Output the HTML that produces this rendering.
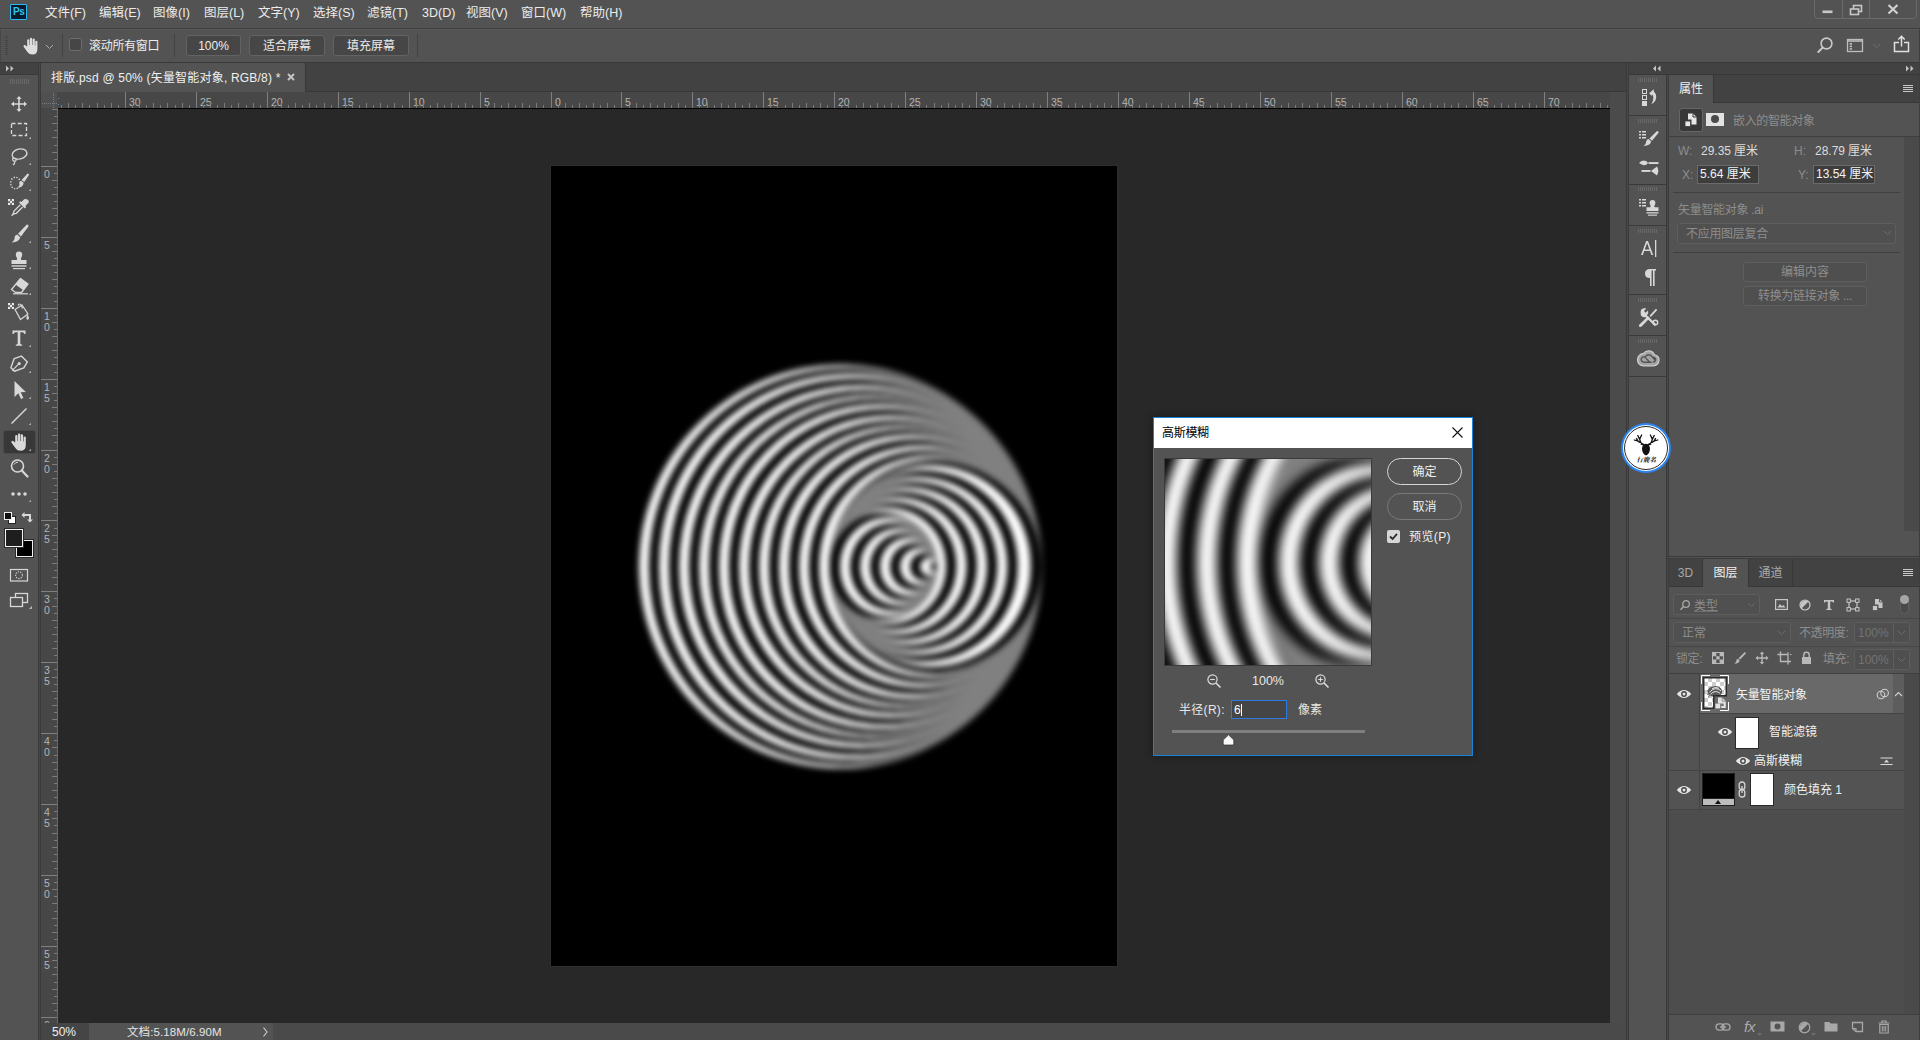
<!DOCTYPE html>
<html lang="zh-CN"><head><meta charset="utf-8"><title>排版.psd @ 50% - Photoshop</title>
<style>
html,body{margin:0;padding:0}
body{width:1920px;height:1040px;overflow:hidden;background:#535353;position:relative;
 font-family:"Liberation Sans","Noto Sans CJK SC",sans-serif;font-size:12px;color:#e4e4e4;line-height:1}
*{box-sizing:border-box}
.a{position:absolute}
.t{position:absolute;white-space:nowrap;line-height:16px;height:16px}
.dim{color:#8d8d8d}
.mid{color:#b9b9b9}
/* bars */
#menubar{left:0;top:0;width:1920px;height:28px;background:#535353}
#menuline{left:0;top:28px;width:1920px;height:1px;background:#3f3f3f}
#optbar{left:0;top:29px;width:1920px;height:33px;background:#535353;border-left:1px solid #484848;border-top:1px solid #5a5a5a}
#optline{left:0;top:62px;width:1920px;height:1px;background:#383838}
.menu{top:5px;font-size:12.5px;color:#ececec}
.btn{position:absolute;top:35px;height:21px;border:1px solid #636363;border-radius:3px;background:#464646;color:#ececec;text-align:center;line-height:21px;font-size:12px}
.vsep{position:absolute;width:1px;background:#434343}
/* window controls */
#wc{left:1814px;top:-4px;width:103px;height:23px;border:1px solid #6a6a6a;border-radius:4px}
#wc i{position:absolute;top:0;width:1px;height:22px;background:#6a6a6a}
/* tools */
#toolhead{left:0;top:63px;width:38px;height:11px;background:#424242}
#tools{left:0;top:74px;width:38px;height:966px;background:#535353;border-top:1px solid #3a3a3a}
#toolborder{left:38px;top:63px;width:3px;height:977px;background:linear-gradient(90deg,#393939 0 1px,#484848 1px 2px,#3b3b3b 2px 3px)}
.grip{position:absolute;height:5px;background:repeating-linear-gradient(90deg,#686868 0 1px,transparent 1px 2px)}
/* doc area */
#tabbar{left:41px;top:63px;width:1585px;height:29px;background:#424242;border-bottom:1px solid #383838}
#doctab{left:41px;top:63px;width:265px;height:29px;background:#535353;border-right:1px solid #383838}
#hruler{left:41px;top:92px;width:1569px;height:17px;background:#474747;border-bottom:1px solid #000}
#vruler{left:41px;top:108px;width:17px;height:915px;background:#474747;border-right:1px solid #6a6a6a}
#corner{left:41px;top:92px;width:16px;height:16px;background:#505050}
.tk{position:absolute;width:1px;background:#7c7c7c}
.tk.M,.tkh.M{background:#808080}
.tkh{position:absolute;height:1px;background:#7c7c7c}
.rl{position:absolute;font-size:10.5px;line-height:10px;color:#b4b4b4}
#canvas{left:58px;top:109px;width:1552px;height:914px;background:#282828;overflow:hidden}
#doc{left:493px;top:57px;width:566px;height:800px;background:#000;box-shadow:0 0 0 1px #2d2d2d}
#vscroll{left:1610px;top:92px;width:16px;height:931px;background:#4b4b4b}
#status{left:41px;top:1023px;width:1585px;height:17px;background:#4a4a4a}
#zoombox{left:41px;top:1023px;width:48px;height:17px;background:#454545}
#docinfo{left:89px;top:1023px;width:184px;height:17px;background:#535353}
/* right dock */
#rborder{left:1626px;top:63px;width:3px;height:977px;background:linear-gradient(90deg,#393939 0 1px,#484848 1px 2px,#3b3b3b 2px 3px)}
#rhead{left:1629px;top:63px;width:291px;height:11px;background:#424242}
#rheadline{left:1629px;top:74px;width:291px;height:1px;background:#383838}
#dock{left:1629px;top:75px;width:37px;height:965px;background:#535353}
#dockborder{left:1666px;top:75px;width:3px;height:965px;background:linear-gradient(90deg,#393939 0 1px,#484848 1px 2px,#3b3b3b 2px 3px)}
.dsep{position:absolute;left:0;width:37px;height:1px;background:#3a3a3a}
/* properties */
#prop{left:1669px;top:75px;width:251px;height:481px;background:#535353}
.tabrow{position:absolute;left:0;top:0;width:251px;height:28px;background:#424242;border-bottom:1px solid #383838}
.tab{position:absolute;top:0;height:28px;line-height:27px;text-align:center;color:#a8a8a8;border-right:1px solid #383838;font-size:12px}
.tab.on{background:#535353;color:#f2f2f2;height:28px}
.inp{position:absolute;height:19px;border:1px solid #6a6a6a;background:#3d3d3d;color:#f4f4f4;line-height:17px;padding-left:2px;white-space:nowrap}
.hline{position:absolute;height:1px;background:#404040}
.dbtn{position:absolute;height:20px;border:1px solid #5f5f5f;border-radius:3px;background:#4f4f4f;color:#8e8e8e;text-align:center;line-height:18px}
/* layers */
#lay{left:1669px;top:557px;width:251px;height:483px;background:#535353;border-top:1px solid #535353}
.lrow{position:absolute;left:0;width:235px}
/* dialog */
#dlg{left:1153px;top:417px;width:320px;height:339px;background:#535353;border:1px solid #1883d7;box-shadow:0 0 8px rgba(0,0,0,.4)}
#dlgtitle{left:0;top:0;width:318px;height:30px;background:#fff;color:#000}
.pill{position:absolute;left:233px;width:75px;height:27px;border-radius:14px;text-align:center;line-height:26px;color:#f0f0f0;font-size:12px}

</style></head><body>
<!-- ===== menu bar ===== -->
<div class="a" id="menubar"></div>
<div class="a" id="menuline"></div>
<div class="a" style="left:10px;top:4px;width:17px;height:16px;background:#0b1a2a;border:1px solid #2fb7f1;border-radius:1px"></div>
<span class="t" style="left:13px;top:4px;font-size:10px;font-weight:bold;color:#31c5f0;letter-spacing:-.3px">Ps</span>
<span class="t menu" style="left:45px">文件(F)</span>
<span class="t menu" style="left:99px">编辑(E)</span>
<span class="t menu" style="left:153px">图像(I)</span>
<span class="t menu" style="left:204px">图层(L)</span>
<span class="t menu" style="left:258px">文字(Y)</span>
<span class="t menu" style="left:313px">选择(S)</span>
<span class="t menu" style="left:367px">滤镜(T)</span>
<span class="t menu" style="left:422px">3D(D)</span>
<span class="t menu" style="left:466px">视图(V)</span>
<span class="t menu" style="left:521px">窗口(W)</span>
<span class="t menu" style="left:580px">帮助(H)</span>
<div class="a" id="wc"><i style="left:27px"></i><i style="left:54px"></i></div>
<svg class="a" style="left:1822px;top:10px" width="12" height="4" viewBox="0 0 12 4" ><rect x="0.5" y="0.5" width="10" height="2.6" fill="#c8c8c8"/></svg><svg class="a" style="left:1849px;top:4px" width="14" height="12" viewBox="0 0 14 12" ><rect x="4.5" y="1.5" width="8" height="6" fill="none" stroke="#c8c8c8" stroke-width="1.6"/><rect x="1.5" y="5" width="8" height="5.5" fill="#535353" stroke="#c8c8c8" stroke-width="1.6"/></svg><svg class="a" style="left:1887px;top:4px" width="12" height="11" viewBox="0 0 12 11" ><path d="M1.5 1 L10.5 9.5 M10.5 1 L1.5 9.5" stroke="#d0d0d0" stroke-width="2.2" fill="none"/></svg>

<!-- ===== options bar ===== -->
<div class="a" id="optbar"></div>
<div class="a" id="optline"></div>
<div class="a" style="left:5px;top:36px;width:3px;height:19px;background:repeating-linear-gradient(0deg,#454545 0 1px,transparent 1px 2px)"></div>
<svg class="a" style="left:20px;top:35px" width="22" height="22" viewBox="0 0 22 22" ><path d="M7.2 11.5 V5.4 a1.1 1.1 0 0 1 2.2 0 V10 h.5 V3.9 a1.1 1.1 0 0 1 2.2 0 V10 h.5 V4.6 a1.1 1.1 0 0 1 2.2 0 V10.6 h.5 V6.8 a1.05 1.05 0 0 1 2.1 0 V14 Q17.5 19.6 12.4 19.6 Q9.2 19.6 7.6 17.2 L3.6 11.8 Q3.1 10.6 4.2 10.1 Q5.1 9.8 5.9 10.7 Z" fill="#dedede"/></svg><svg class="a" style="left:45px;top:44px" width="9" height="6" viewBox="0 0 9 6" ><path d="M1 1 L4.5 4.5 L8 1" fill="none" stroke="#a9a9a9" stroke-width="1"/></svg>
<div class="vsep" style="left:62px;top:34px;height:23px"></div>
<div class="a" style="left:69px;top:38px;width:13px;height:13px;border:1px solid #6d6d6d;border-radius:2px;background:#464646"></div>
<span class="t" style="left:89px;top:38px;color:#ececec;letter-spacing:-.3px">滚动所有窗口</span>
<div class="vsep" style="left:174px;top:34px;height:23px"></div>
<div class="btn" style="left:186px;width:55px">100%</div>
<div class="btn" style="left:249px;width:76px">适合屏幕</div>
<div class="btn" style="left:333px;width:76px">填充屏幕</div>
<div class="vsep" style="left:417px;top:34px;height:23px"></div>
<svg class="a" style="left:1816px;top:36px" width="18" height="18" viewBox="0 0 18 18" ><circle cx="10.5" cy="7.5" r="5.4" fill="none" stroke="#c9c9c9" stroke-width="1.6"/><path d="M6.6 11.6 L2.3 16" stroke="#c9c9c9" stroke-width="2" stroke-linecap="round"/></svg><svg class="a" style="left:1846px;top:38px" width="18" height="15" viewBox="0 0 18 15" ><rect x="1.5" y="1.5" width="15" height="12" fill="none" stroke="#bdbdbd" stroke-width="1.3"/><path d="M1.5 3 H16.5" stroke="#bdbdbd" stroke-width="1.6"/><rect x="3.6" y="5" width="2.4" height="1.6" fill="#bdbdbd"/><rect x="3.6" y="7.6" width="2.4" height="1.6" fill="#bdbdbd"/><rect x="3.6" y="10.2" width="2.4" height="1.6" fill="#bdbdbd"/></svg><svg class="a" style="left:1872px;top:43px" width="9" height="6" viewBox="0 0 9 6" ><path d="M1 1 L4.5 4.5 L8 1" fill="none" stroke="#6c6c6c" stroke-width="1"/></svg><svg class="a" style="left:1892px;top:34px" width="20" height="20" viewBox="0 0 20 20" ><path d="M7 8.5 H2.5 V17.5 H16.5 V8.5 H12" fill="none" stroke="#e0e0e0" stroke-width="1.5"/><path d="M9.5 12.5 V2.5 M6.3 5.6 L9.5 2.3 L12.7 5.6" fill="none" stroke="#e0e0e0" stroke-width="1.5"/></svg>

<!-- ===== tools panel ===== -->
<div class="a" id="toolhead"></div>
<div class="a" id="tools"></div>
<div class="a" id="toolborder"></div>
<svg class="a" style="left:5px;top:65px" width="10" height="7" viewBox="0 0 10 7" ><path d="M1 0.5 L4 3.5 L1 6.5 Z M5.5 0.5 L8.5 3.5 L5.5 6.5 Z" fill="#c4c4c4"/></svg>
<div class="grip" style="left:10px;top:79px;width:19px"></div>
<div class="a" style="left:3px;top:430px;width:33px;height:24px;background:#383838;border:1px solid #4a4a4a;border-radius:3px"></div><svg class="a" style="left:7px;top:92px" width="24" height="24" viewBox="0 0 24 24" ><path d="M12 4 L14.6 7 H12.8 V11.2 H17 V9.4 L20 12 L17 14.6 V12.8 H12.8 V17 H14.6 L12 20 L9.4 17 H11.2 V12.8 H7 V14.6 L4 12 L7 9.4 V11.2 H11.2 V7 H9.4 Z" fill="#d8d8d8"/></svg><svg class="a" style="left:7px;top:118px" width="24" height="24" viewBox="0 0 24 24" ><rect x="4.5" y="5.5" width="15" height="12" fill="none" stroke="#d8d8d8" stroke-width="1.3" stroke-dasharray="4 2.2"/><path d="M25 21 h-3.2 l3.2 -3.2 z" fill="#b0b0b0"/></svg><svg class="a" style="left:7px;top:144px" width="24" height="24" viewBox="0 0 24 24" ><ellipse cx="12.5" cy="10" rx="7.5" ry="5" fill="none" stroke="#d8d8d8" stroke-width="1.4" transform="rotate(-12 12.5 10)"/><path d="M7 13.5 q-2 1 -1 3 q1.5 1.5 3 0 q.8 -1.5 -1 -2.2 M8 16.8 q0 3 -2 4.2" fill="none" stroke="#d8d8d8" stroke-width="1.2"/><path d="M25 21 h-3.2 l3.2 -3.2 z" fill="#b0b0b0"/></svg><svg class="a" style="left:7px;top:170px" width="24" height="24" viewBox="0 0 24 24" ><ellipse cx="8.5" cy="13" rx="4.8" ry="5.8" fill="none" stroke="#d8d8d8" stroke-width="1.3" stroke-dasharray="1.4 1.4"/><path d="M20.6 3.4 Q22.2 3.4 22 5 L17.2 12 L14.6 10 Z" fill="#d8d8d8"/><path d="M14 10.8 L16.6 12.8 Q16.4 17 10.6 18 Q13.4 15.6 12.4 12.6 Z" fill="#d8d8d8"/><path d="M25 21 h-3.2 l3.2 -3.2 z" fill="#b0b0b0"/></svg><svg class="a" style="left:7px;top:196px" width="24" height="24" viewBox="0 0 24 24" ><path d="M19.5 3.2 a2.4 2.4 0 0 1 1.6 4.1 L18.3 10 L19.2 11 L17.8 12.4 L12 6.6 L13.4 5.2 L14.4 6.1 L17.2 3.3 a2.4 2.4 0 0 1 2.3 -.1 Z" fill="#d8d8d8"/><path d="M13.3 8.8 L7 15.1 L6.2 18 L9.3 17.3 L15.6 11 " fill="none" stroke="#d8d8d8" stroke-width="1.3"/><path d="M6.5 17.8 L4.6 19.8" stroke="#d8d8d8" stroke-width="1.3"/><rect x="1" y="3" width="6" height="6" fill="#777"/><path d="M1 3h2v2h-2z M5 3h2v2h-2z M3 5h2v2h-2z M1 7h2v2h-2z M5 7h2v2h-2z" fill="#e8e8e8"/></svg><svg class="a" style="left:7px;top:222px" width="24" height="24" viewBox="0 0 24 24" ><path d="M19.8 2.6 Q21.6 2.4 21.6 4.2 L14 14.4 L11 11.8 Z" fill="#d8d8d8"/><path d="M10.2 12.6 L13.2 15.2 Q12.6 20 4.6 20.6 Q8 18 7.6 15 Q8.4 12.8 10.2 12.6 Z" fill="#d8d8d8"/><path d="M25 21 h-3.2 l3.2 -3.2 z" fill="#b0b0b0"/></svg><svg class="a" style="left:7px;top:248px" width="24" height="24" viewBox="0 0 24 24" ><path d="M12 3.5 a3.2 3.2 0 0 1 3.2 3.2 q0 1.5 -1 3 q-.6 1.3 .3 2.3 H19.5 V16 H4.5 V12 H9.5 q.9 -1 .3 -2.3 q-1 -1.5 -1 -3 A3.2 3.2 0 0 1 12 3.5 Z" fill="#d8d8d8"/><rect x="4.5" y="17.3" width="15" height="1.4" fill="#d8d8d8"/><rect x="6" y="20" width="12" height="1.2" fill="#d8d8d8"/><path d="M25 21 h-3.2 l3.2 -3.2 z" fill="#b0b0b0"/></svg><svg class="a" style="left:7px;top:274px" width="24" height="24" viewBox="0 0 24 24" ><path d="M13.5 4.5 L21 10 L14.5 18.5 H8.5 L4.5 15.5 Z" fill="none" stroke="#d8d8d8" stroke-width="1.3" stroke-linejoin="round"/><path d="M13.5 4.5 L21 10 L16.3 16.2 L8.8 10.7 Z" fill="#d8d8d8"/><path d="M6 19.8 H21" stroke="#d8d8d8" stroke-width="1.2"/><path d="M25 21 h-3.2 l3.2 -3.2 z" fill="#b0b0b0"/></svg><svg class="a" style="left:7px;top:300px" width="24" height="24" viewBox="0 0 24 24" ><path d="M8 9.5 L15 5 L21 14 L13.5 19.5 Z" fill="none" stroke="#d8d8d8" stroke-width="1.3" stroke-linejoin="round"/><path d="M11 5.5 Q12 2.5 14.5 5.5 L15.5 8.5" fill="none" stroke="#d8d8d8" stroke-width="1.2"/><path d="M20.5 14.5 Q23 18 21.3 19.5 Q19.5 20.3 19.3 18 Q19.5 16.5 20.5 14.5 Z" fill="#d8d8d8"/><rect x="1" y="3" width="6" height="6" fill="#777"/><path d="M1 3h2v2h-2z M5 3h2v2h-2z M3 5h2v2h-2z M1 7h2v2h-2z M5 7h2v2h-2z" fill="#e8e8e8"/></svg><svg class="a" style="left:7px;top:326px" width="24" height="24" viewBox="0 0 24 24" ><path d="M5.5 4.5 H18.5 V8 H17.3 Q17 6.2 15.5 6.2 H13.3 V17.6 Q13.3 18.6 15.2 18.7 V19.8 H8.8 V18.7 Q10.7 18.6 10.7 17.6 V6.2 H8.5 Q7 6.2 6.7 8 H5.5 Z" fill="#d8d8d8"/><path d="M25 21 h-3.2 l3.2 -3.2 z" fill="#b0b0b0"/></svg><svg class="a" style="left:7px;top:352px" width="24" height="24" viewBox="0 0 24 24" ><path d="M13.2 3.8 L20 8.8 L17.3 15.2 L8.5 19.8 L4.5 16.8 L6.5 7.3 Z" fill="none" stroke="#d8d8d8" stroke-width="1.4" stroke-linejoin="round" transform="rotate(8 12 12)"/><circle cx="12.2" cy="11.6" r="1.6" fill="#d8d8d8"/><path d="M5.2 18.6 L11.2 12.4" stroke="#d8d8d8" stroke-width="1.2"/><path d="M25 21 h-3.2 l3.2 -3.2 z" fill="#b0b0b0"/></svg><svg class="a" style="left:7px;top:378px" width="24" height="24" viewBox="0 0 24 24" ><path d="M7.5 3 L7.5 19 L11.3 15.2 L14 21 L16.4 19.9 L13.7 14.2 L18.8 14 Z" fill="#d8d8d8"/><path d="M25 21 h-3.2 l3.2 -3.2 z" fill="#b0b0b0"/></svg><svg class="a" style="left:7px;top:404px" width="24" height="24" viewBox="0 0 24 24" ><path d="M4.5 19.5 L19.5 4.5" stroke="#d8d8d8" stroke-width="1.5"/><path d="M25 21 h-3.2 l3.2 -3.2 z" fill="#b0b0b0"/></svg><svg class="a" style="left:7px;top:430px" width="24" height="24" viewBox="0 0 24 24" ><path d="M8.2 12.5 V6.2 a1.15 1.15 0 0 1 2.3 0 V11 h.5 V4.6 a1.15 1.15 0 0 1 2.3 0 V11 h.5 V5.4 a1.15 1.15 0 0 1 2.3 0 V11.6 h.5 V7.6 a1.1 1.1 0 0 1 2.2 0 V15 Q18.8 20.8 13.6 20.8 Q10.2 20.8 8.6 18.3 L4.4 12.6 Q3.9 11.4 5 10.9 Q6 10.6 6.8 11.5 Z" fill="#d8d8d8"/><path d="M25 21 h-3.2 l3.2 -3.2 z" fill="#b0b0b0"/></svg><svg class="a" style="left:7px;top:456px" width="24" height="24" viewBox="0 0 24 24" ><circle cx="10.5" cy="10" r="6" fill="none" stroke="#d8d8d8" stroke-width="1.6"/><path d="M14.8 14.6 L20.5 20.5" stroke="#d8d8d8" stroke-width="2.2" stroke-linecap="round"/><path d="M7 8.5 Q8.5 6 11 6.2" fill="none" stroke="#d8d8d8" stroke-width="1"/></svg><svg class="a" style="left:7px;top:482px" width="24" height="24" viewBox="0 0 24 24" ><circle cx="6" cy="12" r="1.8" fill="#d8d8d8"/><circle cx="12" cy="12" r="1.8" fill="#d8d8d8"/><circle cx="18" cy="12" r="1.8" fill="#d8d8d8"/><path d="M25 20 h-3.2 l3.2 -3.2 z" fill="#b0b0b0"/></svg><svg class="a" style="left:3px;top:511px" width="14" height="14" viewBox="0 0 14 14" ><rect x="5.5" y="5.5" width="7" height="7" fill="#fff" stroke="#222" stroke-width="1"/><rect x="1.5" y="1.5" width="7" height="7" fill="#111" stroke="#eee" stroke-width="1"/></svg><svg class="a" style="left:20px;top:510px" width="14" height="14" viewBox="0 0 14 14" ><path d="M4.5 2 L1.5 5 L4.5 8 V6 H9 V9.5 H7 L10 12.5 L13 9.5 H11 V4 H4.5 Z" fill="#d8d8d8"/></svg><div class="a" style="left:16px;top:540px;width:17px;height:17px;background:#000;border:1px solid #f0f0f0;box-shadow:0 0 0 1px #2a2a2a"></div><div class="a" style="left:5px;top:529px;width:18px;height:18px;background:#1e1e1e;border:1px solid #f4f4f4;box-shadow:0 0 0 1px #2a2a2a"></div><svg class="a" style="left:9px;top:567px" width="20" height="16" viewBox="0 0 20 16" ><rect x="1.5" y="2.5" width="17" height="11.5" fill="none" stroke="#d8d8d8" stroke-width="1.2"/><circle cx="10" cy="8.2" r="3.4" fill="none" stroke="#d8d8d8" stroke-width="1.1" stroke-dasharray="1.2 1.2"/></svg><svg class="a" style="left:8px;top:592px" width="24" height="18" viewBox="0 0 24 18" ><rect x="7.5" y="1.5" width="12" height="9" fill="none" stroke="#d8d8d8" stroke-width="1.3"/><rect x="2.5" y="5.5" width="12" height="9" fill="#535353" stroke="#d8d8d8" stroke-width="1.3"/><path d="M24 17 h-3.2 l3.2 -3.2 z" fill="#b0b0b0"/></svg>

<!-- ===== document window ===== -->
<div class="a" id="tabbar"></div>
<div class="a" id="doctab"></div>
<span class="t" style="left:51px;top:70px;color:#f0f0f0;letter-spacing:.2px">排版.psd @ 50% (矢量智能对象, RGB/8) *</span>
<svg class="a" style="left:287px;top:73px" width="8" height="8" viewBox="0 0 8 8"><path d="M1 1 L7 7 M7 1 L1 7" stroke="#c6c6c6" stroke-width="1.9" fill="none"/></svg>
<div class="a" id="hruler"></div>
<div class="a" id="vruler"></div>
<div class="a" id="corner"></div>
<div class="a" style="left:42px;top:103px;width:15px;height:1px;background:repeating-linear-gradient(90deg,#7a7a7a 0 1px,transparent 1px 2px)"></div>
<div class="a" style="left:53px;top:93px;width:1px;height:15px;background:repeating-linear-gradient(0deg,#7a7a7a 0 1px,transparent 1px 2px)"></div>
<i class="tk" style="left:61px;top:105px;height:3px"></i><i class="tk" style="left:68px;top:103px;height:5px"></i><i class="tk" style="left:75px;top:105px;height:3px"></i><i class="tk" style="left:82px;top:103px;height:5px"></i><i class="tk" style="left:89px;top:105px;height:3px"></i><i class="tk" style="left:97px;top:103px;height:5px"></i><i class="tk" style="left:104px;top:105px;height:3px"></i><i class="tk" style="left:111px;top:103px;height:5px"></i><i class="tk" style="left:118px;top:105px;height:3px"></i><i class="tk M" style="left:125px;top:92px;height:16px"></i><span class="rl" style="left:129px;top:97px">30</span><i class="tk" style="left:132px;top:105px;height:3px"></i><i class="tk" style="left:139px;top:103px;height:5px"></i><i class="tk" style="left:146px;top:105px;height:3px"></i><i class="tk" style="left:153px;top:103px;height:5px"></i><i class="tk" style="left:160px;top:105px;height:3px"></i><i class="tk" style="left:167px;top:103px;height:5px"></i><i class="tk" style="left:175px;top:105px;height:3px"></i><i class="tk" style="left:182px;top:103px;height:5px"></i><i class="tk" style="left:189px;top:105px;height:3px"></i><i class="tk M" style="left:196px;top:92px;height:16px"></i><span class="rl" style="left:200px;top:97px">25</span><i class="tk" style="left:203px;top:105px;height:3px"></i><i class="tk" style="left:210px;top:103px;height:5px"></i><i class="tk" style="left:217px;top:105px;height:3px"></i><i class="tk" style="left:224px;top:103px;height:5px"></i><i class="tk" style="left:231px;top:105px;height:3px"></i><i class="tk" style="left:238px;top:103px;height:5px"></i><i class="tk" style="left:246px;top:105px;height:3px"></i><i class="tk" style="left:253px;top:103px;height:5px"></i><i class="tk" style="left:260px;top:105px;height:3px"></i><i class="tk M" style="left:267px;top:92px;height:16px"></i><span class="rl" style="left:271px;top:97px">20</span><i class="tk" style="left:274px;top:105px;height:3px"></i><i class="tk" style="left:281px;top:103px;height:5px"></i><i class="tk" style="left:288px;top:105px;height:3px"></i><i class="tk" style="left:295px;top:103px;height:5px"></i><i class="tk" style="left:302px;top:105px;height:3px"></i><i class="tk" style="left:309px;top:103px;height:5px"></i><i class="tk" style="left:316px;top:105px;height:3px"></i><i class="tk" style="left:324px;top:103px;height:5px"></i><i class="tk" style="left:331px;top:105px;height:3px"></i><i class="tk M" style="left:338px;top:92px;height:16px"></i><span class="rl" style="left:342px;top:97px">15</span><i class="tk" style="left:345px;top:105px;height:3px"></i><i class="tk" style="left:352px;top:103px;height:5px"></i><i class="tk" style="left:359px;top:105px;height:3px"></i><i class="tk" style="left:366px;top:103px;height:5px"></i><i class="tk" style="left:373px;top:105px;height:3px"></i><i class="tk" style="left:380px;top:103px;height:5px"></i><i class="tk" style="left:387px;top:105px;height:3px"></i><i class="tk" style="left:394px;top:103px;height:5px"></i><i class="tk" style="left:402px;top:105px;height:3px"></i><i class="tk M" style="left:409px;top:92px;height:16px"></i><span class="rl" style="left:413px;top:97px">10</span><i class="tk" style="left:416px;top:105px;height:3px"></i><i class="tk" style="left:423px;top:103px;height:5px"></i><i class="tk" style="left:430px;top:105px;height:3px"></i><i class="tk" style="left:437px;top:103px;height:5px"></i><i class="tk" style="left:444px;top:105px;height:3px"></i><i class="tk" style="left:451px;top:103px;height:5px"></i><i class="tk" style="left:458px;top:105px;height:3px"></i><i class="tk" style="left:465px;top:103px;height:5px"></i><i class="tk" style="left:472px;top:105px;height:3px"></i><i class="tk M" style="left:480px;top:92px;height:16px"></i><span class="rl" style="left:484px;top:97px">5</span><i class="tk" style="left:487px;top:105px;height:3px"></i><i class="tk" style="left:494px;top:103px;height:5px"></i><i class="tk" style="left:501px;top:105px;height:3px"></i><i class="tk" style="left:508px;top:103px;height:5px"></i><i class="tk" style="left:515px;top:105px;height:3px"></i><i class="tk" style="left:522px;top:103px;height:5px"></i><i class="tk" style="left:529px;top:105px;height:3px"></i><i class="tk" style="left:536px;top:103px;height:5px"></i><i class="tk" style="left:543px;top:105px;height:3px"></i><i class="tk M" style="left:551px;top:92px;height:16px"></i><span class="rl" style="left:555px;top:97px">0</span><i class="tk" style="left:558px;top:105px;height:3px"></i><i class="tk" style="left:565px;top:103px;height:5px"></i><i class="tk" style="left:572px;top:105px;height:3px"></i><i class="tk" style="left:579px;top:103px;height:5px"></i><i class="tk" style="left:586px;top:105px;height:3px"></i><i class="tk" style="left:593px;top:103px;height:5px"></i><i class="tk" style="left:600px;top:105px;height:3px"></i><i class="tk" style="left:607px;top:103px;height:5px"></i><i class="tk" style="left:614px;top:105px;height:3px"></i><i class="tk M" style="left:621px;top:92px;height:16px"></i><span class="rl" style="left:625px;top:97px">5</span><i class="tk" style="left:629px;top:105px;height:3px"></i><i class="tk" style="left:636px;top:103px;height:5px"></i><i class="tk" style="left:643px;top:105px;height:3px"></i><i class="tk" style="left:650px;top:103px;height:5px"></i><i class="tk" style="left:657px;top:105px;height:3px"></i><i class="tk" style="left:664px;top:103px;height:5px"></i><i class="tk" style="left:671px;top:105px;height:3px"></i><i class="tk" style="left:678px;top:103px;height:5px"></i><i class="tk" style="left:685px;top:105px;height:3px"></i><i class="tk M" style="left:692px;top:92px;height:16px"></i><span class="rl" style="left:696px;top:97px">10</span><i class="tk" style="left:699px;top:105px;height:3px"></i><i class="tk" style="left:707px;top:103px;height:5px"></i><i class="tk" style="left:714px;top:105px;height:3px"></i><i class="tk" style="left:721px;top:103px;height:5px"></i><i class="tk" style="left:728px;top:105px;height:3px"></i><i class="tk" style="left:735px;top:103px;height:5px"></i><i class="tk" style="left:742px;top:105px;height:3px"></i><i class="tk" style="left:749px;top:103px;height:5px"></i><i class="tk" style="left:756px;top:105px;height:3px"></i><i class="tk M" style="left:763px;top:92px;height:16px"></i><span class="rl" style="left:767px;top:97px">15</span><i class="tk" style="left:770px;top:105px;height:3px"></i><i class="tk" style="left:777px;top:103px;height:5px"></i><i class="tk" style="left:785px;top:105px;height:3px"></i><i class="tk" style="left:792px;top:103px;height:5px"></i><i class="tk" style="left:799px;top:105px;height:3px"></i><i class="tk" style="left:806px;top:103px;height:5px"></i><i class="tk" style="left:813px;top:105px;height:3px"></i><i class="tk" style="left:820px;top:103px;height:5px"></i><i class="tk" style="left:827px;top:105px;height:3px"></i><i class="tk M" style="left:834px;top:92px;height:16px"></i><span class="rl" style="left:838px;top:97px">20</span><i class="tk" style="left:841px;top:105px;height:3px"></i><i class="tk" style="left:848px;top:103px;height:5px"></i><i class="tk" style="left:856px;top:105px;height:3px"></i><i class="tk" style="left:863px;top:103px;height:5px"></i><i class="tk" style="left:870px;top:105px;height:3px"></i><i class="tk" style="left:877px;top:103px;height:5px"></i><i class="tk" style="left:884px;top:105px;height:3px"></i><i class="tk" style="left:891px;top:103px;height:5px"></i><i class="tk" style="left:898px;top:105px;height:3px"></i><i class="tk M" style="left:905px;top:92px;height:16px"></i><span class="rl" style="left:909px;top:97px">25</span><i class="tk" style="left:912px;top:105px;height:3px"></i><i class="tk" style="left:919px;top:103px;height:5px"></i><i class="tk" style="left:926px;top:105px;height:3px"></i><i class="tk" style="left:934px;top:103px;height:5px"></i><i class="tk" style="left:941px;top:105px;height:3px"></i><i class="tk" style="left:948px;top:103px;height:5px"></i><i class="tk" style="left:955px;top:105px;height:3px"></i><i class="tk" style="left:962px;top:103px;height:5px"></i><i class="tk" style="left:969px;top:105px;height:3px"></i><i class="tk M" style="left:976px;top:92px;height:16px"></i><span class="rl" style="left:980px;top:97px">30</span><i class="tk" style="left:983px;top:105px;height:3px"></i><i class="tk" style="left:990px;top:103px;height:5px"></i><i class="tk" style="left:997px;top:105px;height:3px"></i><i class="tk" style="left:1004px;top:103px;height:5px"></i><i class="tk" style="left:1012px;top:105px;height:3px"></i><i class="tk" style="left:1019px;top:103px;height:5px"></i><i class="tk" style="left:1026px;top:105px;height:3px"></i><i class="tk" style="left:1033px;top:103px;height:5px"></i><i class="tk" style="left:1040px;top:105px;height:3px"></i><i class="tk M" style="left:1047px;top:92px;height:16px"></i><span class="rl" style="left:1051px;top:97px">35</span><i class="tk" style="left:1054px;top:105px;height:3px"></i><i class="tk" style="left:1061px;top:103px;height:5px"></i><i class="tk" style="left:1068px;top:105px;height:3px"></i><i class="tk" style="left:1075px;top:103px;height:5px"></i><i class="tk" style="left:1082px;top:105px;height:3px"></i><i class="tk" style="left:1090px;top:103px;height:5px"></i><i class="tk" style="left:1097px;top:105px;height:3px"></i><i class="tk" style="left:1104px;top:103px;height:5px"></i><i class="tk" style="left:1111px;top:105px;height:3px"></i><i class="tk M" style="left:1118px;top:92px;height:16px"></i><span class="rl" style="left:1122px;top:97px">40</span><i class="tk" style="left:1125px;top:105px;height:3px"></i><i class="tk" style="left:1132px;top:103px;height:5px"></i><i class="tk" style="left:1139px;top:105px;height:3px"></i><i class="tk" style="left:1146px;top:103px;height:5px"></i><i class="tk" style="left:1153px;top:105px;height:3px"></i><i class="tk" style="left:1161px;top:103px;height:5px"></i><i class="tk" style="left:1168px;top:105px;height:3px"></i><i class="tk" style="left:1175px;top:103px;height:5px"></i><i class="tk" style="left:1182px;top:105px;height:3px"></i><i class="tk M" style="left:1189px;top:92px;height:16px"></i><span class="rl" style="left:1193px;top:97px">45</span><i class="tk" style="left:1196px;top:105px;height:3px"></i><i class="tk" style="left:1203px;top:103px;height:5px"></i><i class="tk" style="left:1210px;top:105px;height:3px"></i><i class="tk" style="left:1217px;top:103px;height:5px"></i><i class="tk" style="left:1224px;top:105px;height:3px"></i><i class="tk" style="left:1231px;top:103px;height:5px"></i><i class="tk" style="left:1239px;top:105px;height:3px"></i><i class="tk" style="left:1246px;top:103px;height:5px"></i><i class="tk" style="left:1253px;top:105px;height:3px"></i><i class="tk M" style="left:1260px;top:92px;height:16px"></i><span class="rl" style="left:1264px;top:97px">50</span><i class="tk" style="left:1267px;top:105px;height:3px"></i><i class="tk" style="left:1274px;top:103px;height:5px"></i><i class="tk" style="left:1281px;top:105px;height:3px"></i><i class="tk" style="left:1288px;top:103px;height:5px"></i><i class="tk" style="left:1295px;top:105px;height:3px"></i><i class="tk" style="left:1302px;top:103px;height:5px"></i><i class="tk" style="left:1309px;top:105px;height:3px"></i><i class="tk" style="left:1317px;top:103px;height:5px"></i><i class="tk" style="left:1324px;top:105px;height:3px"></i><i class="tk M" style="left:1331px;top:92px;height:16px"></i><span class="rl" style="left:1335px;top:97px">55</span><i class="tk" style="left:1338px;top:105px;height:3px"></i><i class="tk" style="left:1345px;top:103px;height:5px"></i><i class="tk" style="left:1352px;top:105px;height:3px"></i><i class="tk" style="left:1359px;top:103px;height:5px"></i><i class="tk" style="left:1366px;top:105px;height:3px"></i><i class="tk" style="left:1373px;top:103px;height:5px"></i><i class="tk" style="left:1380px;top:105px;height:3px"></i><i class="tk" style="left:1387px;top:103px;height:5px"></i><i class="tk" style="left:1395px;top:105px;height:3px"></i><i class="tk M" style="left:1402px;top:92px;height:16px"></i><span class="rl" style="left:1406px;top:97px">60</span><i class="tk" style="left:1409px;top:105px;height:3px"></i><i class="tk" style="left:1416px;top:103px;height:5px"></i><i class="tk" style="left:1423px;top:105px;height:3px"></i><i class="tk" style="left:1430px;top:103px;height:5px"></i><i class="tk" style="left:1437px;top:105px;height:3px"></i><i class="tk" style="left:1444px;top:103px;height:5px"></i><i class="tk" style="left:1451px;top:105px;height:3px"></i><i class="tk" style="left:1458px;top:103px;height:5px"></i><i class="tk" style="left:1466px;top:105px;height:3px"></i><i class="tk M" style="left:1473px;top:92px;height:16px"></i><span class="rl" style="left:1477px;top:97px">65</span><i class="tk" style="left:1480px;top:105px;height:3px"></i><i class="tk" style="left:1487px;top:103px;height:5px"></i><i class="tk" style="left:1494px;top:105px;height:3px"></i><i class="tk" style="left:1501px;top:103px;height:5px"></i><i class="tk" style="left:1508px;top:105px;height:3px"></i><i class="tk" style="left:1515px;top:103px;height:5px"></i><i class="tk" style="left:1522px;top:105px;height:3px"></i><i class="tk" style="left:1529px;top:103px;height:5px"></i><i class="tk" style="left:1536px;top:105px;height:3px"></i><i class="tk M" style="left:1544px;top:92px;height:16px"></i><span class="rl" style="left:1548px;top:97px">70</span><i class="tk" style="left:1551px;top:105px;height:3px"></i><i class="tk" style="left:1558px;top:103px;height:5px"></i><i class="tk" style="left:1565px;top:105px;height:3px"></i><i class="tk" style="left:1572px;top:103px;height:5px"></i><i class="tk" style="left:1579px;top:105px;height:3px"></i><i class="tk" style="left:1586px;top:103px;height:5px"></i><i class="tk" style="left:1593px;top:105px;height:3px"></i><i class="tk" style="left:1600px;top:103px;height:5px"></i><i class="tk" style="left:1607px;top:105px;height:3px"></i><i class="tkh" style="top:109px;left:52px;width:5px"></i><i class="tkh" style="top:116px;left:54px;width:3px"></i><i class="tkh" style="top:123px;left:52px;width:5px"></i><i class="tkh" style="top:130px;left:54px;width:3px"></i><i class="tkh" style="top:137px;left:52px;width:5px"></i><i class="tkh" style="top:145px;left:54px;width:3px"></i><i class="tkh" style="top:152px;left:52px;width:5px"></i><i class="tkh" style="top:159px;left:54px;width:3px"></i><i class="tkh M" style="top:166px;left:41px;width:16px"></i><span class="rl" style="left:44px;top:169.0px">0</span><i class="tkh" style="top:173px;left:54px;width:3px"></i><i class="tkh" style="top:180px;left:52px;width:5px"></i><i class="tkh" style="top:187px;left:54px;width:3px"></i><i class="tkh" style="top:194px;left:52px;width:5px"></i><i class="tkh" style="top:201px;left:54px;width:3px"></i><i class="tkh" style="top:208px;left:52px;width:5px"></i><i class="tkh" style="top:215px;left:54px;width:3px"></i><i class="tkh" style="top:223px;left:52px;width:5px"></i><i class="tkh" style="top:230px;left:54px;width:3px"></i><i class="tkh M" style="top:237px;left:41px;width:16px"></i><span class="rl" style="left:44px;top:240.0px">5</span><i class="tkh" style="top:244px;left:54px;width:3px"></i><i class="tkh" style="top:251px;left:52px;width:5px"></i><i class="tkh" style="top:258px;left:54px;width:3px"></i><i class="tkh" style="top:265px;left:52px;width:5px"></i><i class="tkh" style="top:272px;left:54px;width:3px"></i><i class="tkh" style="top:279px;left:52px;width:5px"></i><i class="tkh" style="top:286px;left:54px;width:3px"></i><i class="tkh" style="top:293px;left:52px;width:5px"></i><i class="tkh" style="top:301px;left:54px;width:3px"></i><i class="tkh M" style="top:308px;left:41px;width:16px"></i><span class="rl" style="left:44px;top:311.0px">1</span><span class="rl" style="left:44px;top:321.7px">0</span><i class="tkh" style="top:315px;left:54px;width:3px"></i><i class="tkh" style="top:322px;left:52px;width:5px"></i><i class="tkh" style="top:329px;left:54px;width:3px"></i><i class="tkh" style="top:336px;left:52px;width:5px"></i><i class="tkh" style="top:343px;left:54px;width:3px"></i><i class="tkh" style="top:350px;left:52px;width:5px"></i><i class="tkh" style="top:357px;left:54px;width:3px"></i><i class="tkh" style="top:364px;left:52px;width:5px"></i><i class="tkh" style="top:372px;left:54px;width:3px"></i><i class="tkh M" style="top:379px;left:41px;width:16px"></i><span class="rl" style="left:44px;top:382.0px">1</span><span class="rl" style="left:44px;top:392.7px">5</span><i class="tkh" style="top:386px;left:54px;width:3px"></i><i class="tkh" style="top:393px;left:52px;width:5px"></i><i class="tkh" style="top:400px;left:54px;width:3px"></i><i class="tkh" style="top:407px;left:52px;width:5px"></i><i class="tkh" style="top:414px;left:54px;width:3px"></i><i class="tkh" style="top:421px;left:52px;width:5px"></i><i class="tkh" style="top:428px;left:54px;width:3px"></i><i class="tkh" style="top:435px;left:52px;width:5px"></i><i class="tkh" style="top:442px;left:54px;width:3px"></i><i class="tkh M" style="top:450px;left:41px;width:16px"></i><span class="rl" style="left:44px;top:453.0px">2</span><span class="rl" style="left:44px;top:463.7px">0</span><i class="tkh" style="top:457px;left:54px;width:3px"></i><i class="tkh" style="top:464px;left:52px;width:5px"></i><i class="tkh" style="top:471px;left:54px;width:3px"></i><i class="tkh" style="top:478px;left:52px;width:5px"></i><i class="tkh" style="top:485px;left:54px;width:3px"></i><i class="tkh" style="top:492px;left:52px;width:5px"></i><i class="tkh" style="top:499px;left:54px;width:3px"></i><i class="tkh" style="top:506px;left:52px;width:5px"></i><i class="tkh" style="top:513px;left:54px;width:3px"></i><i class="tkh M" style="top:520px;left:41px;width:16px"></i><span class="rl" style="left:44px;top:523.0px">2</span><span class="rl" style="left:44px;top:533.7px">5</span><i class="tkh" style="top:528px;left:54px;width:3px"></i><i class="tkh" style="top:535px;left:52px;width:5px"></i><i class="tkh" style="top:542px;left:54px;width:3px"></i><i class="tkh" style="top:549px;left:52px;width:5px"></i><i class="tkh" style="top:556px;left:54px;width:3px"></i><i class="tkh" style="top:563px;left:52px;width:5px"></i><i class="tkh" style="top:570px;left:54px;width:3px"></i><i class="tkh" style="top:577px;left:52px;width:5px"></i><i class="tkh" style="top:584px;left:54px;width:3px"></i><i class="tkh M" style="top:591px;left:41px;width:16px"></i><span class="rl" style="left:44px;top:594.0px">3</span><span class="rl" style="left:44px;top:604.7px">0</span><i class="tkh" style="top:598px;left:54px;width:3px"></i><i class="tkh" style="top:606px;left:52px;width:5px"></i><i class="tkh" style="top:613px;left:54px;width:3px"></i><i class="tkh" style="top:620px;left:52px;width:5px"></i><i class="tkh" style="top:627px;left:54px;width:3px"></i><i class="tkh" style="top:634px;left:52px;width:5px"></i><i class="tkh" style="top:641px;left:54px;width:3px"></i><i class="tkh" style="top:648px;left:52px;width:5px"></i><i class="tkh" style="top:655px;left:54px;width:3px"></i><i class="tkh M" style="top:662px;left:41px;width:16px"></i><span class="rl" style="left:44px;top:665.0px">3</span><span class="rl" style="left:44px;top:675.7px">5</span><i class="tkh" style="top:669px;left:54px;width:3px"></i><i class="tkh" style="top:677px;left:52px;width:5px"></i><i class="tkh" style="top:684px;left:54px;width:3px"></i><i class="tkh" style="top:691px;left:52px;width:5px"></i><i class="tkh" style="top:698px;left:54px;width:3px"></i><i class="tkh" style="top:705px;left:52px;width:5px"></i><i class="tkh" style="top:712px;left:54px;width:3px"></i><i class="tkh" style="top:719px;left:52px;width:5px"></i><i class="tkh" style="top:726px;left:54px;width:3px"></i><i class="tkh M" style="top:733px;left:41px;width:16px"></i><span class="rl" style="left:44px;top:736.0px">4</span><span class="rl" style="left:44px;top:746.7px">0</span><i class="tkh" style="top:740px;left:54px;width:3px"></i><i class="tkh" style="top:747px;left:52px;width:5px"></i><i class="tkh" style="top:755px;left:54px;width:3px"></i><i class="tkh" style="top:762px;left:52px;width:5px"></i><i class="tkh" style="top:769px;left:54px;width:3px"></i><i class="tkh" style="top:776px;left:52px;width:5px"></i><i class="tkh" style="top:783px;left:54px;width:3px"></i><i class="tkh" style="top:790px;left:52px;width:5px"></i><i class="tkh" style="top:797px;left:54px;width:3px"></i><i class="tkh M" style="top:804px;left:41px;width:16px"></i><span class="rl" style="left:44px;top:807.0px">4</span><span class="rl" style="left:44px;top:817.7px">5</span><i class="tkh" style="top:811px;left:54px;width:3px"></i><i class="tkh" style="top:818px;left:52px;width:5px"></i><i class="tkh" style="top:825px;left:54px;width:3px"></i><i class="tkh" style="top:833px;left:52px;width:5px"></i><i class="tkh" style="top:840px;left:54px;width:3px"></i><i class="tkh" style="top:847px;left:52px;width:5px"></i><i class="tkh" style="top:854px;left:54px;width:3px"></i><i class="tkh" style="top:861px;left:52px;width:5px"></i><i class="tkh" style="top:868px;left:54px;width:3px"></i><i class="tkh M" style="top:875px;left:41px;width:16px"></i><span class="rl" style="left:44px;top:878.0px">5</span><span class="rl" style="left:44px;top:888.7px">0</span><i class="tkh" style="top:882px;left:54px;width:3px"></i><i class="tkh" style="top:889px;left:52px;width:5px"></i><i class="tkh" style="top:896px;left:54px;width:3px"></i><i class="tkh" style="top:903px;left:52px;width:5px"></i><i class="tkh" style="top:911px;left:54px;width:3px"></i><i class="tkh" style="top:918px;left:52px;width:5px"></i><i class="tkh" style="top:925px;left:54px;width:3px"></i><i class="tkh" style="top:932px;left:52px;width:5px"></i><i class="tkh" style="top:939px;left:54px;width:3px"></i><i class="tkh M" style="top:946px;left:41px;width:16px"></i><span class="rl" style="left:44px;top:949.0px">5</span><span class="rl" style="left:44px;top:959.7px">5</span><i class="tkh" style="top:953px;left:54px;width:3px"></i><i class="tkh" style="top:960px;left:52px;width:5px"></i><i class="tkh" style="top:967px;left:54px;width:3px"></i><i class="tkh" style="top:974px;left:52px;width:5px"></i><i class="tkh" style="top:982px;left:54px;width:3px"></i><i class="tkh" style="top:989px;left:52px;width:5px"></i><i class="tkh" style="top:996px;left:54px;width:3px"></i><i class="tkh" style="top:1003px;left:52px;width:5px"></i><i class="tkh" style="top:1010px;left:54px;width:3px"></i><i class="tkh M" style="top:1017px;left:41px;width:16px"></i><span class="rl" style="left:44px;top:1020.0px">6</span><span class="rl" style="left:44px;top:1030.7px">0</span>
<div class="a" style="left:58px;top:98px;width:1px;height:1px;background:#4a8fd0"></div><div class="a" style="left:58px;top:104px;width:1px;height:1px;background:#4a8fd0"></div>
<div class="a" id="canvas">
  <div class="a" id="doc"></div>
  <div class="a" style="left:-58px;top:-109px;width:1920px;height:1040px"><div class="a" style="left:0;top:0;width:1920px;height:1040px;filter:blur(3px)"><div class="a" style="left:638.75px;top:364.67px;width:403.25px;height:403.25px;border-radius:50%;background:#808080;overflow:hidden"><div class="a" style="left:0;top:0;width:100%;height:100%;-webkit-mask-image:conic-gradient(from 180deg at 403.25px 201.62px,transparent 0deg,transparent 30.0deg,#000 44.0deg,#000 136.0deg,transparent 150.0deg,transparent 360deg);mask-image:conic-gradient(from 180deg at 403.25px 201.62px,transparent 0deg,transparent 30.0deg,#000 44.0deg,#000 136.0deg,transparent 150.0deg,transparent 360deg)"><svg class="a" style="left:0;top:0" width="403.25" height="403.25" viewBox="638.75 364.67 403.25 403.25"><rect x="637.75" y="363.67" width="405.25" height="405.25" fill="#000"/><path fill="#fff" fill-rule="evenodd" d="M638.75 566.3a201.62 201.62 0 1 0 403.25 0a201.62 201.62 0 1 0 -403.25 0zM648.75 566.3a196.61 196.61 0 1 0 393.21 0a196.61 196.61 0 1 0 -393.21 0zM658.75 566.3a191.59 191.59 0 1 0 383.17 0a191.59 191.59 0 1 0 -383.17 0zM668.75 566.3a186.57 186.57 0 1 0 373.13 0a186.57 186.57 0 1 0 -373.13 0zM678.75 566.3a181.54 181.54 0 1 0 363.09 0a181.54 181.54 0 1 0 -363.09 0zM688.75 566.3a176.52 176.52 0 1 0 353.05 0a176.52 176.52 0 1 0 -353.05 0zM698.75 566.3a171.50 171.50 0 1 0 343.01 0a171.50 171.50 0 1 0 -343.01 0zM708.75 566.3a166.49 166.49 0 1 0 332.97 0a166.49 166.49 0 1 0 -332.97 0zM718.75 566.3a161.47 161.47 0 1 0 322.93 0a161.47 161.47 0 1 0 -322.93 0zM728.75 566.3a156.45 156.45 0 1 0 312.89 0a156.45 156.45 0 1 0 -312.89 0zM738.75 566.3a151.42 151.42 0 1 0 302.85 0a151.42 151.42 0 1 0 -302.85 0zM748.75 566.3a146.40 146.40 0 1 0 292.81 0a146.40 146.40 0 1 0 -292.81 0zM758.75 566.3a141.38 141.38 0 1 0 282.77 0a141.38 141.38 0 1 0 -282.77 0zM768.75 566.3a136.37 136.37 0 1 0 272.73 0a136.37 136.37 0 1 0 -272.73 0zM778.75 566.3a131.35 131.35 0 1 0 262.69 0a131.35 131.35 0 1 0 -262.69 0zM788.75 566.3a126.33 126.33 0 1 0 252.65 0a126.33 126.33 0 1 0 -252.65 0zM798.75 566.3a121.30 121.30 0 1 0 242.61 0a121.30 121.30 0 1 0 -242.61 0zM808.75 566.3a116.28 116.28 0 1 0 232.57 0a116.28 116.28 0 1 0 -232.57 0zM818.75 566.3a111.26 111.26 0 1 0 222.53 0a111.26 111.26 0 1 0 -222.53 0zM828.75 566.3a106.25 106.25 0 1 0 212.49 0a106.25 106.25 0 1 0 -212.49 0zM838.75 566.3a101.23 101.23 0 1 0 202.45 0a101.23 101.23 0 1 0 -202.45 0zM848.75 566.3a96.21 96.21 0 1 0 192.41 0a96.21 96.21 0 1 0 -192.41 0zM858.75 566.3a91.18 91.18 0 1 0 182.37 0a91.18 91.18 0 1 0 -182.37 0zM868.75 566.3a86.16 86.16 0 1 0 172.33 0a86.16 86.16 0 1 0 -172.33 0zM878.75 566.3a81.14 81.14 0 1 0 162.29 0a81.14 81.14 0 1 0 -162.29 0zM888.75 566.3a76.12 76.12 0 1 0 152.25 0a76.12 76.12 0 1 0 -152.25 0zM898.75 566.3a71.11 71.11 0 1 0 142.21 0a71.11 71.11 0 1 0 -142.21 0zM908.75 566.3a66.09 66.09 0 1 0 132.17 0a66.09 66.09 0 1 0 -132.17 0zM918.75 566.3a61.07 61.07 0 1 0 122.13 0a61.07 61.07 0 1 0 -122.13 0zM928.75 566.3a56.04 56.04 0 1 0 112.09 0a56.04 56.04 0 1 0 -112.09 0zM938.75 566.3a51.02 51.02 0 1 0 102.05 0a51.02 51.02 0 1 0 -102.05 0zM948.75 566.3a46.00 46.00 0 1 0 92.01 0a46.00 46.00 0 1 0 -92.01 0zM958.75 566.3a40.99 40.99 0 1 0 81.97 0a40.99 40.99 0 1 0 -81.97 0zM968.75 566.3a35.97 35.97 0 1 0 71.93 0a35.97 35.97 0 1 0 -71.93 0zM978.75 566.3a30.95 30.95 0 1 0 61.89 0a30.95 30.95 0 1 0 -61.89 0zM988.75 566.3a25.92 25.92 0 1 0 51.85 0a25.92 25.92 0 1 0 -51.85 0zM998.75 566.3a20.90 20.90 0 1 0 41.81 0a20.90 20.90 0 1 0 -41.81 0zM1008.75 566.3a15.88 15.88 0 1 0 31.77 0a15.88 15.88 0 1 0 -31.77 0zM1018.75 566.3a10.87 10.87 0 1 0 21.73 0a10.87 10.87 0 1 0 -21.73 0zM1028.75 566.3a5.85 5.85 0 1 0 11.69 0a5.85 5.85 0 1 0 -11.69 0zM1038.75 566.3a0.83 0.83 0 1 0 1.65 0a0.83 0.83 0 1 0 -1.65 0z"/></svg></div></div><div class="a" style="left:834.5px;top:463.3px;width:206px;height:206px;border-radius:50%;background:#000"></div><div class="a" style="left:828.75px;top:465.42px;width:201.75px;height:201.75px;border-radius:50%;background:#808080;overflow:hidden"><div class="a" style="left:0;top:0;width:100%;height:100%;-webkit-mask-image:conic-gradient(from 0deg at 0.00px 100.88px,transparent 0deg,transparent 30.0deg,#000 44.0deg,#000 136.0deg,transparent 150.0deg,transparent 360deg);mask-image:conic-gradient(from 0deg at 0.00px 100.88px,transparent 0deg,transparent 30.0deg,#000 44.0deg,#000 136.0deg,transparent 150.0deg,transparent 360deg)"><svg class="a" style="left:0;top:0" width="201.75" height="201.75" viewBox="828.75 465.42 201.75 201.75"><rect x="827.75" y="464.42" width="203.75" height="203.75" fill="#000"/><path fill="#fff" fill-rule="evenodd" d="M828.75 566.3a100.88 100.88 0 1 0 201.75 0a100.88 100.88 0 1 0 -201.75 0zM828.79 566.3a94.31 94.31 0 1 0 188.61 0a94.31 94.31 0 1 0 -188.61 0zM828.83 566.3a89.18 89.18 0 1 0 178.37 0a89.18 89.18 0 1 0 -178.37 0zM828.87 566.3a84.06 84.06 0 1 0 168.13 0a84.06 84.06 0 1 0 -168.13 0zM828.91 566.3a78.94 78.94 0 1 0 157.89 0a78.94 78.94 0 1 0 -157.89 0zM828.95 566.3a73.82 73.82 0 1 0 147.65 0a73.82 73.82 0 1 0 -147.65 0zM828.99 566.3a68.70 68.70 0 1 0 137.41 0a68.70 68.70 0 1 0 -137.41 0zM829.03 566.3a63.58 63.58 0 1 0 127.17 0a63.58 63.58 0 1 0 -127.17 0zM829.07 566.3a58.46 58.46 0 1 0 116.93 0a58.46 58.46 0 1 0 -116.93 0zM829.11 566.3a53.34 53.34 0 1 0 106.69 0a53.34 53.34 0 1 0 -106.69 0zM829.15 566.3a48.23 48.23 0 1 0 96.45 0a48.23 48.23 0 1 0 -96.45 0zM829.19 566.3a43.10 43.10 0 1 0 86.21 0a43.10 43.10 0 1 0 -86.21 0zM829.23 566.3a37.99 37.99 0 1 0 75.97 0a37.99 37.99 0 1 0 -75.97 0zM829.27 566.3a32.87 32.87 0 1 0 65.73 0a32.87 32.87 0 1 0 -65.73 0zM829.31 566.3a27.75 27.75 0 1 0 55.49 0a27.75 27.75 0 1 0 -55.49 0zM829.35 566.3a22.62 22.62 0 1 0 45.25 0a22.62 22.62 0 1 0 -45.25 0zM829.39 566.3a17.50 17.50 0 1 0 35.01 0a17.50 17.50 0 1 0 -35.01 0zM829.43 566.3a12.39 12.39 0 1 0 24.77 0a12.39 12.39 0 1 0 -24.77 0zM829.47 566.3a7.26 7.26 0 1 0 14.53 0a7.26 7.26 0 1 0 -14.53 0zM829.51 566.3a2.14 2.14 0 1 0 4.29 0a2.14 2.14 0 1 0 -4.29 0z"/></svg></div></div><div class="a" style="left:830.00px;top:512.55px;width:107.50px;height:107.50px;border-radius:50%;background:#808080;overflow:hidden"><div class="a" style="left:0;top:0;width:100%;height:100%;-webkit-mask-image:conic-gradient(from 180deg at 107.50px 53.75px,transparent 0deg,transparent 30.0deg,#000 44.0deg,#000 136.0deg,transparent 150.0deg,transparent 360deg);mask-image:conic-gradient(from 180deg at 107.50px 53.75px,transparent 0deg,transparent 30.0deg,#000 44.0deg,#000 136.0deg,transparent 150.0deg,transparent 360deg)"><svg class="a" style="left:0;top:0" width="107.50" height="107.50" viewBox="830.00 512.55 107.50 107.50"><rect x="829.00" y="511.55" width="109.50" height="109.50" fill="#000"/><path fill="#fff" fill-rule="evenodd" d="M840.00 566.3a48.74 48.74 0 1 0 97.47 0a48.74 48.74 0 1 0 -97.47 0zM850.00 566.3a43.72 43.72 0 1 0 87.44 0a43.72 43.72 0 1 0 -87.44 0zM860.00 566.3a38.70 38.70 0 1 0 77.41 0a38.70 38.70 0 1 0 -77.41 0zM870.00 566.3a33.69 33.69 0 1 0 67.38 0a33.69 33.69 0 1 0 -67.38 0zM880.00 566.3a28.68 28.68 0 1 0 57.35 0a28.68 28.68 0 1 0 -57.35 0zM890.00 566.3a23.66 23.66 0 1 0 47.32 0a23.66 23.66 0 1 0 -47.32 0zM900.00 566.3a18.64 18.64 0 1 0 37.29 0a18.64 18.64 0 1 0 -37.29 0zM910.00 566.3a13.63 13.63 0 1 0 27.26 0a13.63 13.63 0 1 0 -27.26 0zM920.00 566.3a8.62 8.62 0 1 0 17.23 0a8.62 8.62 0 1 0 -17.23 0zM930.00 566.3a3.60 3.60 0 1 0 7.20 0a3.60 3.60 0 1 0 -7.20 0z"/></svg></div></div></div></div>
</div>
<div class="a" id="vscroll"></div>
<div class="a" id="status"></div>
<div class="a" id="zoombox"></div>
<div class="a" id="docinfo"></div>
<span class="t" style="left:52px;top:1024px;color:#f0f0f0;font-size:12px">50%</span>
<span class="t" style="left:127px;top:1024px;color:#e6e6e6;font-size:11.5px;letter-spacing:.1px">文档:5.18M/6.90M</span>
<svg class="a" style="left:260px;top:1026px" width="10" height="12" viewBox="0 0 10 12"><path d="M3.5 1.5 L7 6 L3.5 10.5" fill="none" stroke="#cfcfcf" stroke-width="1.1"/></svg>

<!-- ===== right dock ===== -->
<div class="a" id="rborder"></div>
<div class="a" id="rhead"></div>
<div class="a" id="rheadline"></div>
<svg class="a" style="left:1652px;top:65px" width="10" height="7" viewBox="0 0 10 7" ><path d="M4 0.5 L1 3.5 L4 6.5 Z M8.5 0.5 L5.5 3.5 L8.5 6.5 Z" fill="#c4c4c4"/></svg><svg class="a" style="left:1905px;top:65px" width="10" height="7" viewBox="0 0 10 7" ><path d="M1 0.5 L4 3.5 L1 6.5 Z M5.5 0.5 L8.5 3.5 L5.5 6.5 Z" fill="#c4c4c4"/></svg>
<div class="a" id="dock">
<div class="dsep" style="top:40px"></div><div class="dsep" style="top:109px"></div><div class="dsep" style="top:150px"></div><div class="dsep" style="top:219px"></div><div class="dsep" style="top:260px"></div><div class="dsep" style="top:301px"></div><div class="grip" style="left:9px;top:3px;width:19px;height:4px"></div><div class="grip" style="left:9px;top:44px;width:19px;height:4px"></div><div class="grip" style="left:9px;top:112px;width:19px;height:4px"></div><div class="grip" style="left:9px;top:154px;width:19px;height:4px"></div><div class="grip" style="left:9px;top:223px;width:19px;height:4px"></div><div class="grip" style="left:9px;top:264px;width:19px;height:4px"></div><svg class="a" style="left:7px;top:11px" width="24" height="24" viewBox="0 0 24 24" ><rect x="6.5" y="3.5" width="4" height="4" fill="none" stroke="#d8d8d8" stroke-width="1"/><rect x="6.5" y="9.5" width="4" height="4" fill="none" stroke="#d8d8d8" stroke-width="1"/><rect x="6" y="15" width="5" height="5" fill="#d8d8d8"/><path d="M13.2 7.2 L17.6 3.2 L17.9 5.6 Q21.6 9.6 19.4 14.6 Q18 17.2 15.2 18 Q18.6 13.4 16.6 8.4 L15.4 9.8 Z" fill="#d8d8d8"/></svg><svg class="a" style="left:7px;top:52px" width="24" height="24" viewBox="0 0 24 24" ><path d="M3 4h2v1.4h-2z M6 4h4v1.4h-4z M3 7h2v1.4h-2z M6 7h4v1.4h-4z M3 10h2v1.4h-2z M6 10h4v1.4h-4z" fill="#d8d8d8"/><path d="M21 4 Q22.8 4 22.6 5.8 L16 13.8 L13.4 11.4 Z" fill="#d8d8d8"/><path d="M12.6 12 L15.2 14.4 Q14.6 18.4 7.4 19 Q10.6 16.6 10.2 14.2 Q11 12 12.6 12 Z" fill="#d8d8d8"/></svg><svg class="a" style="left:7px;top:81px" width="24" height="24" viewBox="0 0 24 24" ><path d="M3 7 Q6 3.2 10 5 Q11.5 6 12 7 Q10.5 9.6 7.5 9.3 Q5 8.6 3 7 Z" fill="#d8d8d8"/><rect x="12.5" y="6.1" width="10" height="1.9" fill="#d8d8d8"/><rect x="5.5" y="14" width="9" height="1.9" fill="#d8d8d8"/><path d="M15 15 L21 10.5 Q23.5 15 21 19.5 Z" fill="#d8d8d8"/></svg><svg class="a" style="left:7px;top:120px" width="24" height="24" viewBox="0 0 24 24" ><path d="M3 4h2v1.4h-2z M6 4h4v1.4h-4z M3 7h2v1.4h-2z M6 7h4v1.4h-4z M3 10h2v1.4h-2z M6 10h4v1.4h-4z" fill="#d8d8d8"/><path d="M16.5 5 a2.9 2.9 0 0 1 2.9 2.9 q0 1.3 -.9 2.5 q-.5 1 .3 1.9 H22.5 V16 H10.5 V12.3 H14.2 q.8 -.9 .3 -1.9 q-.9 -1.2 -.9 -2.5 A2.9 2.9 0 0 1 16.5 5 Z" fill="#d8d8d8"/><rect x="10.5" y="17.2" width="12" height="1.3" fill="#d8d8d8"/><rect x="12" y="19.6" width="9" height="1.1" fill="#d8d8d8"/></svg><svg class="a" style="left:7px;top:161px" width="24" height="24" viewBox="0 0 24 24" ><path d="M5 19 L10.2 5 H12 L17.2 19 H15.4 L14 15 H8.2 L6.8 19 Z M8.8 13.4 H13.4 L11.1 6.9 Z" fill="#d8d8d8"/><rect x="19" y="4" width="1.3" height="17" fill="#d8d8d8"/></svg><svg class="a" style="left:7px;top:190px" width="24" height="24" viewBox="0 0 24 24" ><path d="M14.2 4 H20 V5.6 H18.6 V21 H17 V5.6 H15.6 V21 H14 V13 Q9 13 9 8.5 Q9 4 14.2 4 Z" fill="#d8d8d8"/></svg><svg class="a" style="left:7px;top:231px" width="24" height="24" viewBox="0 0 24 24" ><path d="M4.2 4.6 Q6.6 2.6 9.4 3.6 L7 6 L8.6 7.8 L11 5.6 Q12 8.4 10 10.6 L19.6 19.4 L17.8 21 L8.4 12 Q6 12.8 4 10.8 Q2.8 7.4 4.2 4.6 Z" fill="#d8d8d8" transform="translate(1 -1)"/><path d="M3.4 18.6 L12 10.2 L13.8 12 L5.6 20.6 Q4 21.4 3.2 20.4 Q2.6 19.4 3.4 18.6 Z" fill="#d8d8d8"/><path d="M14.2 10.4 L20.6 3.4" stroke="#d8d8d8" stroke-width="1.8"/><circle cx="19.4" cy="16.6" r="2.3" fill="none" stroke="#d8d8d8" stroke-width="1.4"/></svg><svg class="a" style="left:7px;top:272px" width="24" height="24" viewBox="0 0 24 24" ><path d="M7.6 6.4 Q10.4 2.8 14.8 4.2 Q17.4 5.2 18.4 7.8 Q23.2 8.6 23 13.4 Q22.4 18.6 17.2 18.8 H7.2 Q1.4 18.2 1.6 12.6 Q2 7.4 7.6 6.4 Z" fill="#a4a4a4" stroke="#cdcdcd" stroke-width="1.3"/><path d="M15.6 15.2 H8.2 Q5.2 14.8 5.2 12.4 Q5.4 9.8 8.4 9.6 L13.8 15.2 M9.4 9.6 Q12 6.4 15 8.6 L19.4 13.6 M16.8 15.2 Q19.6 14.8 19.6 12.6 Q19.4 10.4 17 10.2" fill="none" stroke="#555" stroke-width="1.4"/></svg>
</div>
<div class="a" id="dockborder"></div>

<!-- ===== properties panel ===== -->
<div class="a" id="prop">
  <div class="tabrow"></div>
  <div class="tab on" style="left:0;width:45px;line-height:28px">属性</div>
  <svg class="a" style="left:234px;top:10px" width="10" height="7" viewBox="0 0 10 7" ><path d="M0 0.5 H10 M0 2.5 H10 M0 4.5 H10 M0 6.5 H10" stroke="#c8c8c8" stroke-width="1"/></svg>
  <div class="a" style="left:0;top:61px;width:251px;height:1px;background:#3f3f3f"></div>
  <div class="a" style="left:235px;top:62px;width:16px;height:394px;background:#4a4a4a"></div>
  <div class="a" style="left:10px;top:33px;width:24px;height:24px;background:#383838;border:1px solid #666;border-radius:3px"></div>
  <svg class="a" style="left:13px;top:36px" width="18" height="18" viewBox="0 0 18 18" ><path d="M6 2.5 H11 L14.5 6 V13.5 H9.5 V8.5 H6 Z" fill="#e6e6e6"/><path d="M11 2.5 V6 H14.5" fill="none" stroke="#383838" stroke-width="1"/><rect x="3" y="10" width="5.5" height="5.5" fill="#e6e6e6" stroke="#383838" stroke-width=".8"/></svg>
  <div class="a" style="left:37px;top:38px;width:18px;height:13px;background:#e2e2e2"></div>
  <div class="a" style="left:42px;top:40px;width:8px;height:8px;border-radius:50%;background:#4a4a4a"></div>
  <span class="t dim" style="left:64px;top:38px;letter-spacing:-.35px">嵌入的智能对象</span>

  <span class="t dim" style="left:9px;top:68px">W:</span>
  <span class="t" style="left:32px;top:68px;color:#dcdcdc">29.35</span>
  <span class="t" style="left:65px;top:68px;color:#dcdcdc">厘米</span>
  <span class="t dim" style="left:125px;top:68px">H:</span>
  <span class="t" style="left:146px;top:68px;color:#dcdcdc">28.79</span>
  <span class="t" style="left:179px;top:68px;color:#dcdcdc">厘米</span>
  <span class="t dim" style="left:13px;top:92px">X:</span>
  <div class="inp" style="left:28px;top:90px;width:62px">5.64 厘米</div>
  <span class="t dim" style="left:129px;top:92px">Y:</span>
  <div class="inp" style="left:144px;top:90px;width:62px">13.54 厘米</div>
  <div class="hline" style="left:4px;top:117px;width:227px"></div>
  <span class="t dim" style="left:9px;top:127px;letter-spacing:-.3px">矢量智能对象 .ai</span>
  <div class="a" style="left:8px;top:148px;width:219px;height:21px;border:1px solid #5e5e5e;border-radius:3px;background:#505050"></div>
  <span class="t dim" style="left:17px;top:151px;letter-spacing:-.3px">不应用图层复合</span>
  <svg class="a" style="left:214px;top:155px" width="9" height="6" viewBox="0 0 9 6"><path d="M1 1 L4.5 4.5 L8 1" fill="none" stroke="#6e6e6e" stroke-width="1"/></svg>
  <div class="hline" style="left:4px;top:177px;width:227px"></div>
  <div class="dbtn" style="left:74px;top:187px;width:124px">编辑内容</div>
  <div class="dbtn" style="left:74px;top:211px;width:124px;letter-spacing:-.3px">转换为链接对象 ...</div>
</div>

<!-- ===== layers panel ===== -->
<div class="a" id="lay">
  <div class="a" style="left:0;top:-2px;width:251px;height:1px;background:#383838"></div>
  <div class="a" style="left:0;top:0;width:251px;height:1px;background:#3c3c3c"></div>
  <div class="tabrow" style="top:1px"></div>
  <div class="tab" style="left:0;top:1px;width:34px;line-height:28px">3D</div>
  <div class="tab on" style="left:34px;top:1px;width:46px;line-height:28px">图层</div>
  <div class="tab" style="left:80px;top:1px;width:44px;line-height:28px">通道</div>
  <svg class="a" style="left:234px;top:11px" width="10" height="7" viewBox="0 0 10 7" ><path d="M0 0.5 H10 M0 2.5 H10 M0 4.5 H10 M0 6.5 H10" stroke="#c8c8c8" stroke-width="1"/></svg>
  <!-- filter row -->
  <div class="a" style="left:4px;top:36px;width:87px;height:21px;border:1px solid #5e5e5e;border-radius:3px;background:#505050"></div>
  <svg class="a" style="left:10px;top:41px" width="12" height="12" viewBox="0 0 12 12" ><circle cx="7" cy="5" r="3.3" fill="none" stroke="#a8a8a8" stroke-width="1.3"/><path d="M4.6 7.6 L1.5 10.8" stroke="#a8a8a8" stroke-width="1.5"/></svg>
  <span class="t dim" style="left:25px;top:40px;text-decoration:underline;text-decoration-color:#6e6e6e">类型</span>
  <svg class="a" style="left:78px;top:44px" width="9" height="6" viewBox="0 0 9 6"><path d="M1 1 L4.5 4.5 L8 1" fill="none" stroke="#6a6a6a" stroke-width="1"/></svg>
  <svg class="a" style="left:106px;top:41px" width="13" height="11" viewBox="0 0 13 11" ><rect x="0.6" y="0.6" width="11.8" height="9.8" fill="none" stroke="#c6c6c6" stroke-width="1.2"/><path d="M2.5 8.5 L5 5 L7 7.2 L8.5 6 L10.5 8.5 Z" fill="#c6c6c6"/></svg><svg class="a" style="left:130px;top:41px" width="12" height="12" viewBox="0 0 12 12" ><circle cx="6" cy="6" r="5" fill="none" stroke="#c6c6c6" stroke-width="1.2"/><path d="M2.5 9.5 A5 5 0 0 1 9.5 2.5 Z" fill="#c6c6c6"/></svg><svg class="a" style="left:154px;top:41px" width="12" height="12" viewBox="0 0 12 12" ><path d="M1 1 H11 V3.6 H10 Q9.8 2.4 8.6 2.4 H7.2 V9.3 Q7.2 10 8.6 10.1 V11 H3.4 V10.1 Q4.8 10 4.8 9.3 V2.4 H3.4 Q2.2 2.4 2 3.6 H1 Z" fill="#c6c6c6"/></svg><svg class="a" style="left:177px;top:40px" width="14" height="14" viewBox="0 0 14 14" ><rect x="3" y="3" width="8" height="8" fill="none" stroke="#c6c6c6" stroke-width="1.2"/><rect x="1" y="1" width="3.4" height="3.4" fill="#535353" stroke="#c6c6c6" stroke-width="1"/><rect x="9.6" y="1" width="3.4" height="3.4" fill="#535353" stroke="#c6c6c6" stroke-width="1"/><rect x="1" y="9.6" width="3.4" height="3.4" fill="#535353" stroke="#c6c6c6" stroke-width="1"/><rect x="9.6" y="9.6" width="3.4" height="3.4" fill="#535353" stroke="#c6c6c6" stroke-width="1"/></svg><svg class="a" style="left:202px;top:40px" width="13" height="14" viewBox="0 0 13 14" ><path d="M4 1 H8.5 L11.5 4 V10 H7.5 V6.5 H4 Z" fill="#c6c6c6"/><path d="M8.5 1 V4 H11.5" fill="none" stroke="#535353" stroke-width=".9"/><rect x="1.5" y="7.5" width="5" height="5" fill="#c6c6c6" stroke="#535353" stroke-width=".8"/></svg><div class="a" style="left:231px;top:38px;width:9px;height:18px;border:1px solid #606060;border-radius:5px;background:#4a4a4a"></div><div class="a" style="left:231px;top:37px;width:9px;height:9px;border-radius:50%;background:#a6a6a6"></div>
  <div class="a" style="left:0;top:60px;width:251px;height:1px;background:#474747"></div>
  <div class="a" style="left:0;top:88px;width:251px;height:1px;background:#474747"></div>
  <!-- blend row -->
  <div class="a" style="left:4px;top:64px;width:118px;height:21px;border:1px solid #5e5e5e;border-radius:3px;background:#505050"></div>
  <span class="t dim" style="left:13px;top:67px">正常</span>
  <svg class="a" style="left:108px;top:72px" width="9" height="6" viewBox="0 0 9 6"><path d="M1 1 L4.5 4.5 L8 1" fill="none" stroke="#6a6a6a" stroke-width="1"/></svg>
  <span class="t dim" style="left:130px;top:67px;letter-spacing:-.4px">不透明度:</span>
  <div class="a" style="left:185px;top:64px;width:56px;height:21px;border:1px solid #5e5e5e;border-radius:3px;background:#4f4f4f"></div>
  <div class="a" style="left:224px;top:65px;width:1px;height:19px;background:#5e5e5e"></div>
  <span class="t" style="left:189px;top:67px;color:#737373">100%</span>
  <svg class="a" style="left:228px;top:72px" width="9" height="6" viewBox="0 0 9 6"><path d="M1 1 L4.5 4.5 L8 1" fill="none" stroke="#6a6a6a" stroke-width="1"/></svg>
  <!-- lock row -->
  <span class="t dim" style="left:7px;top:93px;letter-spacing:-.4px">锁定:</span>
  <svg class="a" style="left:43px;top:94px" width="13" height="13" viewBox="0 0 13 13" ><rect x="0.5" y="0.5" width="11" height="11" fill="none" stroke="#b9b9b9" stroke-width="1"/><path d="M1 1h3.3v3.3h-3.3z M7.6 1h3.4v3.3h-3.4z M4.3 4.3h3.3v3.3h-3.3z M1 7.6h3.3v3.4h-3.3z M7.6 7.6h3.4v3.4h-3.4z" fill="#b9b9b9"/></svg><svg class="a" style="left:64px;top:93px" width="14" height="14" viewBox="0 0 14 14" ><path d="M11.8 1 L13 2.2 L7.2 8.6 L5.6 7.2 Z" fill="#b9b9b9"/><path d="M5 7.8 L6.7 9.4 Q6.2 12 1.5 12.8 Q3.8 10.8 3.5 9 Q4 7.8 5 7.8 Z" fill="#b9b9b9"/></svg><svg class="a" style="left:86px;top:93px" width="14" height="14" viewBox="0 0 14 14" ><path d="M7 0.5 L9.2 3 H7.7 V6.3 H11 V4.8 L13.5 7 L11 9.2 V7.7 H7.7 V11 H9.2 L7 13.5 L4.8 11 H6.3 V7.7 H3 V9.2 L0.5 7 L3 4.8 V6.3 H6.3 V3 H4.8 Z" fill="#b9b9b9"/></svg><svg class="a" style="left:108px;top:93px" width="15" height="14" viewBox="0 0 15 14" ><path d="M3.5 0.5 V10.5 H14 M0.5 3.5 H11 V13.5" fill="none" stroke="#b9b9b9" stroke-width="1.3"/><path d="M11 1 v2 M13 3.5 h1.5" stroke="#b9b9b9" stroke-width="1"/></svg><svg class="a" style="left:132px;top:93px" width="11" height="14" viewBox="0 0 11 14" ><path d="M2.8 6 V4 a2.7 2.7 0 0 1 5.4 0 V6" fill="none" stroke="#b9b9b9" stroke-width="1.4"/><rect x="1" y="6" width="9" height="7" fill="#b9b9b9"/></svg>
  <span class="t dim" style="left:154px;top:93px;letter-spacing:-.4px">填充:</span>
  <div class="a" style="left:185px;top:91px;width:56px;height:21px;border:1px solid #5e5e5e;border-radius:3px;background:#4f4f4f"></div>
  <div class="a" style="left:224px;top:92px;width:1px;height:19px;background:#5e5e5e"></div>
  <span class="t" style="left:189px;top:94px;color:#737373">100%</span>
  <svg class="a" style="left:228px;top:99px" width="9" height="6" viewBox="0 0 9 6"><path d="M1 1 L4.5 4.5 L8 1" fill="none" stroke="#6a6a6a" stroke-width="1"/></svg>
  <div class="a" style="left:0;top:115px;width:251px;height:1px;background:#3f3f3f"></div>
  <!-- list bg -->
  <div class="a" style="left:0;top:116px;width:235px;height:341px;background:#4d4d4d"></div>
  <div class="a" style="left:235px;top:116px;width:16px;height:341px;background:#4a4a4a"></div>
  <!-- layer 1 (selected) -->
  <div class="a" style="left:0;top:116px;width:31px;height:135px;background:#535353;border-right:1px solid #434343"></div>
  <div class="a" style="left:31px;top:116px;width:193px;height:39px;background:#696969"></div>
  <div class="a" style="left:224px;top:116px;width:11px;height:39px;background:#5d5d5d"></div>
  <div class="a" style="left:31px;top:155px;width:204px;height:96px;background:#535353"></div>
  <div class="a" style="left:31px;top:155px;width:204px;height:1px;background:#444"></div>
  <div class="a" style="left:0;top:212px;width:235px;height:1px;background:#444"></div>
  <div class="a" style="left:0;top:251px;width:235px;height:1px;background:#444"></div>
  <svg class="a" style="left:7px;top:130px" width="16" height="12" viewBox="0 0 16 12" ><path d="M0.8 6 Q8 -2.2 15.2 6 Q8 14.2 0.8 6 Z" fill="#e6e6e6"/><circle cx="8" cy="6" r="2.9" fill="#444"/><circle cx="8" cy="6" r="1.5" fill="#e6e6e6"/></svg>
  <svg class="a" style="left:32px;top:117px" width="28" height="36" viewBox="0 0 28 36" ><path d="M0.5 9 V0.5 H9 M19 0.5 H27.5 V9 M27.5 27 V35.5 H19 M9 35.5 H0.5 V27" fill="none" stroke="#fff" stroke-width="1"/><rect x="2.7" y="2.7" width="22.6" height="30.6" fill="#fff"/><path d="M7 3h4v4h-4zM15 3h4v4h-4zM23 3h2v4h-2zM3 7h4v4h-4zM11 7h4v4h-4zM19 7h4v4h-4zM7 11h4v4h-4zM15 11h4v4h-4zM23 11h2v4h-2zM3 15h4v4h-4zM11 15h4v4h-4zM19 15h4v4h-4zM7 19h4v4h-4zM15 19h4v4h-4zM23 19h2v4h-2zM3 23h4v4h-4zM11 23h4v4h-4zM19 23h4v4h-4zM7 27h4v4h-4zM15 27h4v4h-4zM23 27h2v4h-2zM3 31h4v2h-4zM11 31h4v2h-4zM19 31h4v2h-4z" fill="#cdcdcd"/><ellipse cx="14" cy="16.4" rx="7.2" ry="5.4" fill="#5a5a5a"/><path d="M8.5 17.3 q5.5 -6.5 11.5 -1.5 M9.5 19.3 q4.5 -5 9.5 -1 M11 13.8 q3 -2.5 7 -.5" fill="none" stroke="#e4e4e4" stroke-width="1"/><path d="M8 16.8 l-1.6 -1 M8 18.8 l-1.8 .6 M8.6 20.8 l-1.4 1.4" stroke="#444" stroke-width="1"/><rect x="12.8" y="20.8" width="13.5" height="13.5" fill="#696969"/><path d="M2.7 2.7 H25.3 V20.8 H12.8 V33.3 H2.7 Z" fill="none" stroke="#2b2b2b" stroke-width="1.5"/><path d="M17 22.6 H21.2 L24.8 26.2 V33 H20.2 V28.6 H17 Z" fill="#e2e2e2"/><path d="M21.2 22.6 V26.2 H24.8 Z" fill="#f4f4f4" stroke="#696969" stroke-width=".7"/><path d="M20.2 28.6 H22.6 V31 H20.2 Z" fill="#696969"/><rect x="14.4" y="28.6" width="4.8" height="4.8" fill="#e2e2e2"/></svg>
  <span class="t" style="left:67px;top:129px;color:#f4f4f4;letter-spacing:-.2px">矢量智能对象</span>
  <svg class="a" style="left:207px;top:130px" width="14" height="12" viewBox="0 0 14 12" ><circle cx="5" cy="7" r="3.8" fill="none" stroke="#d0d0d0" stroke-width="1.1"/><circle cx="8.6" cy="5" r="3.8" fill="none" stroke="#d0d0d0" stroke-width="1.1"/></svg><svg class="a" style="left:225px;top:133px" width="9" height="6" viewBox="0 0 9 6" ><path d="M1 5 L4.5 1.5 L8 5" fill="none" stroke="#d0d0d0" stroke-width="1.1"/></svg>
  <!-- smart filter row -->
  <svg class="a" style="left:48px;top:168px" width="16" height="12" viewBox="0 0 16 12" ><path d="M0.8 6 Q8 -2.2 15.2 6 Q8 14.2 0.8 6 Z" fill="#e6e6e6"/><circle cx="8" cy="6" r="2.9" fill="#444"/><circle cx="8" cy="6" r="1.5" fill="#e6e6e6"/></svg>
  <div class="a" style="left:66px;top:159px;width:24px;height:32px;background:#fff;border:1px solid #2a2a2a"></div>
  <span class="t" style="left:100px;top:166px;color:#f0f0f0">智能滤镜</span>
  <svg class="a" style="left:66px;top:197px" width="16" height="12" viewBox="0 0 16 12" ><path d="M0.8 6 Q8 -2.2 15.2 6 Q8 14.2 0.8 6 Z" fill="#e6e6e6"/><circle cx="8" cy="6" r="2.9" fill="#444"/><circle cx="8" cy="6" r="1.5" fill="#e6e6e6"/></svg>
  <span class="t" style="left:85px;top:195px;color:#f0f0f0">高斯模糊</span>
  <svg class="a" style="left:211px;top:198px" width="13" height="11" viewBox="0 0 13 11" ><path d="M0.5 2 H12.5 M0.5 8.5 H12.5" stroke="#dcdcdc" stroke-width="1.2"/><path d="M6.5 3.6 L9 6.6 H4 Z" fill="#dcdcdc"/></svg>
  <!-- layer 2 -->
  <svg class="a" style="left:7px;top:226px" width="16" height="12" viewBox="0 0 16 12" ><path d="M0.8 6 Q8 -2.2 15.2 6 Q8 14.2 0.8 6 Z" fill="#e6e6e6"/><circle cx="8" cy="6" r="2.9" fill="#444"/><circle cx="8" cy="6" r="1.5" fill="#e6e6e6"/></svg>
  <div class="a" style="left:33px;top:215px;width:33px;height:33px;background:#000;border:1px solid #1e1e1e"></div>
  <div class="a" style="left:34px;top:240px;width:31px;height:7px;background:#bdbdbd;border-top:1px solid #222"></div>
  <svg class="a" style="left:45px;top:242px" width="8" height="5" viewBox="0 0 8 5"><path d="M4 0 L7 4 H1 Z" fill="#111"/></svg>
  <svg class="a" style="left:68px;top:223px" width="10" height="17" viewBox="0 0 10 17" ><rect x="2.2" y="1" width="5.6" height="7.5" rx="2.6" fill="none" stroke="#d4d4d4" stroke-width="1.3"/><rect x="2.2" y="8.5" width="5.6" height="7.5" rx="2.6" fill="none" stroke="#d4d4d4" stroke-width="1.3"/><path d="M5 5 V12" stroke="#d4d4d4" stroke-width="1.3"/></svg>
  <div class="a" style="left:81px;top:215px;width:24px;height:33px;background:#fff;border:1px solid #2a2a2a"></div>
  <span class="t" style="left:115px;top:224px;color:#f0f0f0">颜色填充 1</span>
  <!-- bottom bar -->
  <div class="a" style="left:0;top:456px;width:251px;height:1px;background:#3f3f3f"></div>
  <div class="a" style="left:0;top:457px;width:251px;height:26px;background:#535353"></div>
  <svg class="a" style="left:46px;top:463px" width="16" height="12" viewBox="0 0 16 12" ><rect x="1" y="2.8" width="8" height="6.4" rx="3.2" fill="none" stroke="#a8a8a8" stroke-width="1.3"/><rect x="7" y="2.8" width="8" height="6.4" rx="3.2" fill="none" stroke="#a8a8a8" stroke-width="1.3"/><path d="M5 6 H11" stroke="#a8a8a8" stroke-width="1.3"/></svg><span class="t" style="left:75px;top:461px;font-style:italic;font-size:15.5px;color:#a8a8a8;letter-spacing:-.6px">fx</span><svg class="a" style="left:88px;top:475px" width="5" height="3" viewBox="0 0 5 3" ><path d="M0 0 H5 L2.5 3 Z" fill="#6c6c6c"/></svg><svg class="a" style="left:101px;top:463px" width="15" height="11" viewBox="0 0 15 11" ><rect x="0.5" y="0.5" width="14" height="10" fill="#a8a8a8"/><circle cx="7.5" cy="5.5" r="3" fill="#535353"/></svg><svg class="a" style="left:129px;top:463px" width="13" height="13" viewBox="0 0 13 13" ><circle cx="6.5" cy="6.5" r="5.3" fill="none" stroke="#a8a8a8" stroke-width="1.2"/><path d="M2.8 10.2 A5.3 5.3 0 0 1 10.2 2.8 Z" fill="#a8a8a8"/></svg><svg class="a" style="left:142px;top:475px" width="5" height="3" viewBox="0 0 5 3" ><path d="M0 0 H5 L2.5 3 Z" fill="#6c6c6c"/></svg><svg class="a" style="left:155px;top:463px" width="14" height="11" viewBox="0 0 14 11" ><path d="M0.5 1 H5.5 L6.5 2.5 H13.5 V10.5 H0.5 Z" fill="#a8a8a8"/></svg><svg class="a" style="left:182px;top:463px" width="13" height="12" viewBox="0 0 13 12" ><path d="M1.5 1.5 H11.5 V10.5 H5 L1.5 7.5 Z" fill="none" stroke="#a8a8a8" stroke-width="1.3"/><path d="M1.5 7.5 H5 V10.5" fill="none" stroke="#a8a8a8" stroke-width="1.1"/></svg><svg class="a" style="left:209px;top:462px" width="12" height="14" viewBox="0 0 12 14" ><path d="M0.5 3 H11.5 M4 3 V1 H8 V3" fill="none" stroke="#a8a8a8" stroke-width="1.2"/><path d="M1.8 4.5 H10.2 V13 H1.8 Z" fill="none" stroke="#a8a8a8" stroke-width="1.2"/><path d="M4.3 6 V11.5 M6 6 V11.5 M7.7 6 V11.5" stroke="#a8a8a8" stroke-width="1"/></svg>
</div>

<div class="a" style="left:1919px;top:29px;width:1px;height:1011px;background:#3e3e3e"></div>
<!-- floating avatar -->
<div class="a" style="left:1621px;top:423px;width:50px;height:50px;border-radius:50%;background:#2a86f3"></div>
<div class="a" style="left:1623px;top:425px;width:46px;height:46px;border-radius:50%;background:#fff"></div>
<div class="a" style="left:1624px;top:426px;width:44px;height:44px;border-radius:50%;border:1px solid #2a2a2a"></div>
<svg class="a" style="left:1631px;top:433px" width="30" height="24" viewBox="0 0 30 24" ><path d="M15 22.5 Q11.2 21 11 15.5 Q11 13.2 12.2 12.4 L9.4 11.4 L10.6 10.3 L13 11.2 Q15 10.4 17 11.2 L19.4 10.3 L20.6 11.4 L17.8 12.4 Q19 13.2 19 15.5 Q18.8 21 15 22.5 Z" fill="#111"/><path d="M12.6 11.5 Q9 10.5 8.6 5 M10 9.6 Q6.5 9 5.5 5.5 M8.7 6.5 L6.8 2.5 M8.8 6 L10.6 2 M6.6 8 L3.2 7 M17.4 11.5 Q21 10.5 21.4 5 M20 9.6 Q23.5 9 24.5 5.5 M21.3 6.5 L23.2 2.5 M21.2 6 L19.4 2 M23.4 8 L26.8 7" fill="none" stroke="#111" stroke-width="1.3" stroke-linecap="round"/></svg>
<span class="t" style="left:1636.5px;top:456px;font-size:6.5px;line-height:8px;height:8px;color:#111;font-weight:bold;letter-spacing:0;font-style:italic;font-family:'Liberation Serif','Noto Serif CJK SC',serif">行鹿名</span>

<!-- ===== Gaussian blur dialog ===== -->
<div class="a" id="dlg">
  <div class="a" id="dlgtitle"></div>
  <span class="t" style="left:8px;top:7px;color:#000;letter-spacing:-.3px">高斯模糊</span>
  <svg class="a" style="left:297px;top:8px" width="13" height="13" viewBox="0 0 13 13"><path d="M1.5 1.5 L11.5 11.5 M11.5 1.5 L1.5 11.5" stroke="#111" stroke-width="1.1" fill="none"/></svg>
  <div class="a" style="left:10px;top:40px;width:208px;height:208px;background:#000;border:1px solid #3a3a3a;overflow:hidden">
    <div class="a" style="left:0;top:0;width:1920px;height:1040px;transform-origin:0 0;transform:scale(2) translate(-783.1px,-515px)"><div class="a" style="left:0;top:0;width:1920px;height:1040px;filter:blur(3px)"><div class="a" style="left:638.75px;top:364.67px;width:403.25px;height:403.25px;border-radius:50%;background:#808080;overflow:hidden"><div class="a" style="left:0;top:0;width:100%;height:100%;-webkit-mask-image:conic-gradient(from 180deg at 403.25px 201.62px,transparent 0deg,transparent 30.0deg,#000 44.0deg,#000 136.0deg,transparent 150.0deg,transparent 360deg);mask-image:conic-gradient(from 180deg at 403.25px 201.62px,transparent 0deg,transparent 30.0deg,#000 44.0deg,#000 136.0deg,transparent 150.0deg,transparent 360deg)"><svg class="a" style="left:0;top:0" width="403.25" height="403.25" viewBox="638.75 364.67 403.25 403.25"><rect x="637.75" y="363.67" width="405.25" height="405.25" fill="#000"/><path fill="#fff" fill-rule="evenodd" d="M638.75 566.3a201.62 201.62 0 1 0 403.25 0a201.62 201.62 0 1 0 -403.25 0zM648.75 566.3a196.61 196.61 0 1 0 393.21 0a196.61 196.61 0 1 0 -393.21 0zM658.75 566.3a191.59 191.59 0 1 0 383.17 0a191.59 191.59 0 1 0 -383.17 0zM668.75 566.3a186.57 186.57 0 1 0 373.13 0a186.57 186.57 0 1 0 -373.13 0zM678.75 566.3a181.54 181.54 0 1 0 363.09 0a181.54 181.54 0 1 0 -363.09 0zM688.75 566.3a176.52 176.52 0 1 0 353.05 0a176.52 176.52 0 1 0 -353.05 0zM698.75 566.3a171.50 171.50 0 1 0 343.01 0a171.50 171.50 0 1 0 -343.01 0zM708.75 566.3a166.49 166.49 0 1 0 332.97 0a166.49 166.49 0 1 0 -332.97 0zM718.75 566.3a161.47 161.47 0 1 0 322.93 0a161.47 161.47 0 1 0 -322.93 0zM728.75 566.3a156.45 156.45 0 1 0 312.89 0a156.45 156.45 0 1 0 -312.89 0zM738.75 566.3a151.42 151.42 0 1 0 302.85 0a151.42 151.42 0 1 0 -302.85 0zM748.75 566.3a146.40 146.40 0 1 0 292.81 0a146.40 146.40 0 1 0 -292.81 0zM758.75 566.3a141.38 141.38 0 1 0 282.77 0a141.38 141.38 0 1 0 -282.77 0zM768.75 566.3a136.37 136.37 0 1 0 272.73 0a136.37 136.37 0 1 0 -272.73 0zM778.75 566.3a131.35 131.35 0 1 0 262.69 0a131.35 131.35 0 1 0 -262.69 0zM788.75 566.3a126.33 126.33 0 1 0 252.65 0a126.33 126.33 0 1 0 -252.65 0zM798.75 566.3a121.30 121.30 0 1 0 242.61 0a121.30 121.30 0 1 0 -242.61 0zM808.75 566.3a116.28 116.28 0 1 0 232.57 0a116.28 116.28 0 1 0 -232.57 0zM818.75 566.3a111.26 111.26 0 1 0 222.53 0a111.26 111.26 0 1 0 -222.53 0zM828.75 566.3a106.25 106.25 0 1 0 212.49 0a106.25 106.25 0 1 0 -212.49 0zM838.75 566.3a101.23 101.23 0 1 0 202.45 0a101.23 101.23 0 1 0 -202.45 0zM848.75 566.3a96.21 96.21 0 1 0 192.41 0a96.21 96.21 0 1 0 -192.41 0zM858.75 566.3a91.18 91.18 0 1 0 182.37 0a91.18 91.18 0 1 0 -182.37 0zM868.75 566.3a86.16 86.16 0 1 0 172.33 0a86.16 86.16 0 1 0 -172.33 0zM878.75 566.3a81.14 81.14 0 1 0 162.29 0a81.14 81.14 0 1 0 -162.29 0zM888.75 566.3a76.12 76.12 0 1 0 152.25 0a76.12 76.12 0 1 0 -152.25 0zM898.75 566.3a71.11 71.11 0 1 0 142.21 0a71.11 71.11 0 1 0 -142.21 0zM908.75 566.3a66.09 66.09 0 1 0 132.17 0a66.09 66.09 0 1 0 -132.17 0zM918.75 566.3a61.07 61.07 0 1 0 122.13 0a61.07 61.07 0 1 0 -122.13 0zM928.75 566.3a56.04 56.04 0 1 0 112.09 0a56.04 56.04 0 1 0 -112.09 0zM938.75 566.3a51.02 51.02 0 1 0 102.05 0a51.02 51.02 0 1 0 -102.05 0zM948.75 566.3a46.00 46.00 0 1 0 92.01 0a46.00 46.00 0 1 0 -92.01 0zM958.75 566.3a40.99 40.99 0 1 0 81.97 0a40.99 40.99 0 1 0 -81.97 0zM968.75 566.3a35.97 35.97 0 1 0 71.93 0a35.97 35.97 0 1 0 -71.93 0zM978.75 566.3a30.95 30.95 0 1 0 61.89 0a30.95 30.95 0 1 0 -61.89 0zM988.75 566.3a25.92 25.92 0 1 0 51.85 0a25.92 25.92 0 1 0 -51.85 0zM998.75 566.3a20.90 20.90 0 1 0 41.81 0a20.90 20.90 0 1 0 -41.81 0zM1008.75 566.3a15.88 15.88 0 1 0 31.77 0a15.88 15.88 0 1 0 -31.77 0zM1018.75 566.3a10.87 10.87 0 1 0 21.73 0a10.87 10.87 0 1 0 -21.73 0zM1028.75 566.3a5.85 5.85 0 1 0 11.69 0a5.85 5.85 0 1 0 -11.69 0zM1038.75 566.3a0.83 0.83 0 1 0 1.65 0a0.83 0.83 0 1 0 -1.65 0z"/></svg></div></div><div class="a" style="left:834.5px;top:463.3px;width:206px;height:206px;border-radius:50%;background:#000"></div><div class="a" style="left:828.75px;top:465.42px;width:201.75px;height:201.75px;border-radius:50%;background:#808080;overflow:hidden"><div class="a" style="left:0;top:0;width:100%;height:100%;-webkit-mask-image:conic-gradient(from 0deg at 0.00px 100.88px,transparent 0deg,transparent 30.0deg,#000 44.0deg,#000 136.0deg,transparent 150.0deg,transparent 360deg);mask-image:conic-gradient(from 0deg at 0.00px 100.88px,transparent 0deg,transparent 30.0deg,#000 44.0deg,#000 136.0deg,transparent 150.0deg,transparent 360deg)"><svg class="a" style="left:0;top:0" width="201.75" height="201.75" viewBox="828.75 465.42 201.75 201.75"><rect x="827.75" y="464.42" width="203.75" height="203.75" fill="#000"/><path fill="#fff" fill-rule="evenodd" d="M828.75 566.3a100.88 100.88 0 1 0 201.75 0a100.88 100.88 0 1 0 -201.75 0zM828.79 566.3a94.31 94.31 0 1 0 188.61 0a94.31 94.31 0 1 0 -188.61 0zM828.83 566.3a89.18 89.18 0 1 0 178.37 0a89.18 89.18 0 1 0 -178.37 0zM828.87 566.3a84.06 84.06 0 1 0 168.13 0a84.06 84.06 0 1 0 -168.13 0zM828.91 566.3a78.94 78.94 0 1 0 157.89 0a78.94 78.94 0 1 0 -157.89 0zM828.95 566.3a73.82 73.82 0 1 0 147.65 0a73.82 73.82 0 1 0 -147.65 0zM828.99 566.3a68.70 68.70 0 1 0 137.41 0a68.70 68.70 0 1 0 -137.41 0zM829.03 566.3a63.58 63.58 0 1 0 127.17 0a63.58 63.58 0 1 0 -127.17 0zM829.07 566.3a58.46 58.46 0 1 0 116.93 0a58.46 58.46 0 1 0 -116.93 0zM829.11 566.3a53.34 53.34 0 1 0 106.69 0a53.34 53.34 0 1 0 -106.69 0zM829.15 566.3a48.23 48.23 0 1 0 96.45 0a48.23 48.23 0 1 0 -96.45 0zM829.19 566.3a43.10 43.10 0 1 0 86.21 0a43.10 43.10 0 1 0 -86.21 0zM829.23 566.3a37.99 37.99 0 1 0 75.97 0a37.99 37.99 0 1 0 -75.97 0zM829.27 566.3a32.87 32.87 0 1 0 65.73 0a32.87 32.87 0 1 0 -65.73 0zM829.31 566.3a27.75 27.75 0 1 0 55.49 0a27.75 27.75 0 1 0 -55.49 0zM829.35 566.3a22.62 22.62 0 1 0 45.25 0a22.62 22.62 0 1 0 -45.25 0zM829.39 566.3a17.50 17.50 0 1 0 35.01 0a17.50 17.50 0 1 0 -35.01 0zM829.43 566.3a12.39 12.39 0 1 0 24.77 0a12.39 12.39 0 1 0 -24.77 0zM829.47 566.3a7.26 7.26 0 1 0 14.53 0a7.26 7.26 0 1 0 -14.53 0zM829.51 566.3a2.14 2.14 0 1 0 4.29 0a2.14 2.14 0 1 0 -4.29 0z"/></svg></div></div><div class="a" style="left:830.00px;top:512.55px;width:107.50px;height:107.50px;border-radius:50%;background:#808080;overflow:hidden"><div class="a" style="left:0;top:0;width:100%;height:100%;-webkit-mask-image:conic-gradient(from 180deg at 107.50px 53.75px,transparent 0deg,transparent 30.0deg,#000 44.0deg,#000 136.0deg,transparent 150.0deg,transparent 360deg);mask-image:conic-gradient(from 180deg at 107.50px 53.75px,transparent 0deg,transparent 30.0deg,#000 44.0deg,#000 136.0deg,transparent 150.0deg,transparent 360deg)"><svg class="a" style="left:0;top:0" width="107.50" height="107.50" viewBox="830.00 512.55 107.50 107.50"><rect x="829.00" y="511.55" width="109.50" height="109.50" fill="#000"/><path fill="#fff" fill-rule="evenodd" d="M840.00 566.3a48.74 48.74 0 1 0 97.47 0a48.74 48.74 0 1 0 -97.47 0zM850.00 566.3a43.72 43.72 0 1 0 87.44 0a43.72 43.72 0 1 0 -87.44 0zM860.00 566.3a38.70 38.70 0 1 0 77.41 0a38.70 38.70 0 1 0 -77.41 0zM870.00 566.3a33.69 33.69 0 1 0 67.38 0a33.69 33.69 0 1 0 -67.38 0zM880.00 566.3a28.68 28.68 0 1 0 57.35 0a28.68 28.68 0 1 0 -57.35 0zM890.00 566.3a23.66 23.66 0 1 0 47.32 0a23.66 23.66 0 1 0 -47.32 0zM900.00 566.3a18.64 18.64 0 1 0 37.29 0a18.64 18.64 0 1 0 -37.29 0zM910.00 566.3a13.63 13.63 0 1 0 27.26 0a13.63 13.63 0 1 0 -27.26 0zM920.00 566.3a8.62 8.62 0 1 0 17.23 0a8.62 8.62 0 1 0 -17.23 0zM930.00 566.3a3.60 3.60 0 1 0 7.20 0a3.60 3.60 0 1 0 -7.20 0z"/></svg></div></div></div></div>
  </div>
  <div class="pill" style="top:40px;border:1px solid #d6d6d6">确定</div>
  <div class="pill" style="top:75px;border:1px solid #7a7a7a">取消</div>
  <div class="a" style="left:233px;top:112px;width:13px;height:13px;background:#d6d6d6;border-radius:2px"></div>
  <svg class="a" style="left:234px;top:113px" width="11" height="11" viewBox="0 0 11 11"><path d="M2 5.5 L4.6 8 L9 2.8" fill="none" stroke="#2b2b2b" stroke-width="1.8"/></svg>
  <span class="t" style="left:255px;top:111px;color:#f0f0f0;letter-spacing:.4px">预览(P)</span>
  <svg class="a" style="left:52px;top:255px" width="16" height="16" viewBox="0 0 16 16" ><circle cx="6.5" cy="6.5" r="4.6" fill="none" stroke="#dcdcdc" stroke-width="1.2"/><path d="M10 10 L14.5 14.5" stroke="#dcdcdc" stroke-width="1.6"/><path d="M4.2 6.5 H8.8" stroke="#dcdcdc" stroke-width="1.1"/></svg><svg class="a" style="left:160px;top:255px" width="16" height="16" viewBox="0 0 16 16" ><circle cx="6.5" cy="6.5" r="4.6" fill="none" stroke="#dcdcdc" stroke-width="1.2"/><path d="M10 10 L14.5 14.5" stroke="#dcdcdc" stroke-width="1.6"/><path d="M4.2 6.5 H8.8 M6.5 4.2 V8.8" stroke="#dcdcdc" stroke-width="1.1"/></svg>
  <span class="t" style="left:98px;top:255px;color:#e8e8e8;font-size:12.5px">100%</span>
  <span class="t" style="left:25px;top:284px;color:#e8e8e8;letter-spacing:.3px">半径(R):</span>
  <div class="a" style="left:77px;top:282px;width:56px;height:19px;border:1px solid #2d7be0;background:#454545"></div>
  <span class="t" style="left:80px;top:284px;color:#fff">6</span>
  <div class="a" style="left:87px;top:286px;width:1px;height:12px;background:#fff"></div>
  <span class="t" style="left:144px;top:284px;color:#e8e8e8">像素</span>
  <div class="a" style="left:18px;top:312px;width:193px;height:3px;background:#7f7f7f"></div>
  <svg class="a" style="left:68px;top:316px" width="13" height="12" viewBox="0 0 13 12"><path d="M6.5 0.8 L11.8 6 V9.5 Q11.8 11 10.3 11 H2.7 Q1.2 11 1.2 9.5 V6 Z" fill="#fafafa" stroke="#2e2e2e" stroke-width=".7"/></svg>
</div>

</body></html>
